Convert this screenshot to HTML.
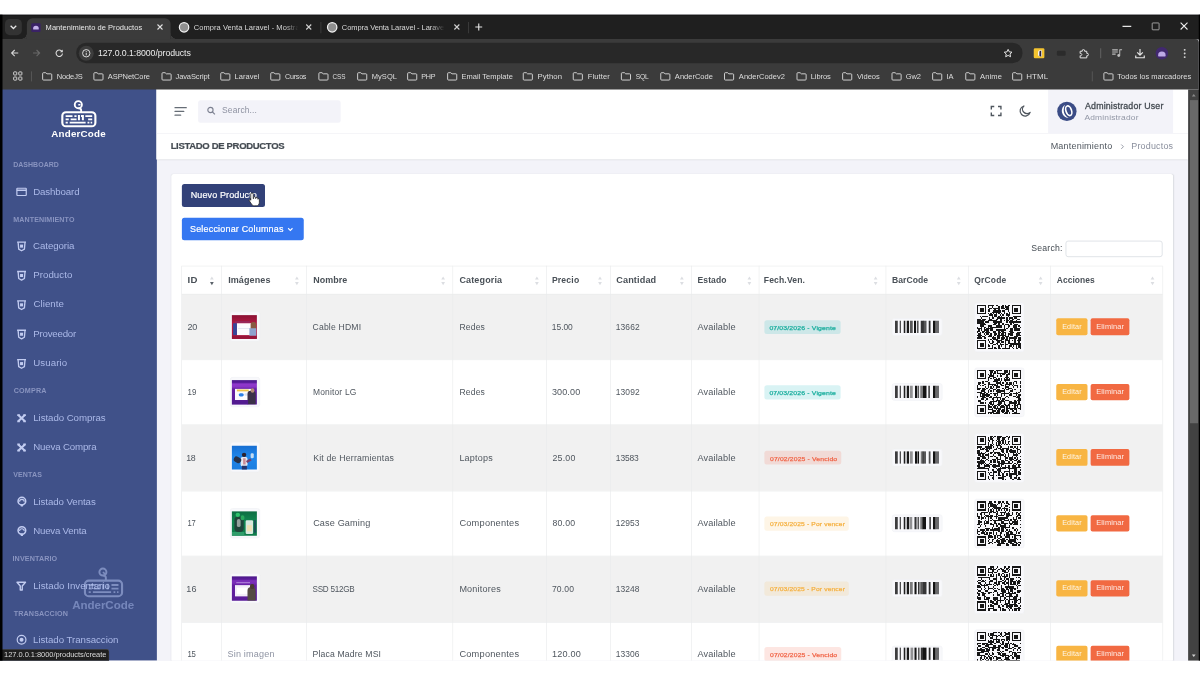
<!DOCTYPE html>
<html lang="es">
<head>
<meta charset="utf-8">
<title>Mantenimiento de Productos</title>
<style>
*{box-sizing:border-box;margin:0;padding:0}
html,body{width:1200px;height:675px;overflow:hidden;background:#fff}
body{font-family:"Liberation Sans",sans-serif;position:relative}
#stage{filter:blur(.75px);position:absolute;left:0;top:0;width:1920px;height:1034px;transform:translateY(14.5px) scale(.625);transform-origin:0 0;background:#f3f3f9;overflow:hidden}
#botmask{position:absolute;left:0;top:660.5px;width:1200px;height:15px;background:#fff;z-index:60}
.t{position:absolute;white-space:nowrap;line-height:1;display:block;transform-origin:0 50%}
.a{position:absolute;display:block}
svg{position:absolute;display:block;overflow:visible}
#tabstrip{position:absolute;left:0;top:0;width:1920px;height:40px;background:#1f1f1f;border-top:2px solid #171717}
#toolbar{position:absolute;left:0;top:38.5px;width:1918px;height:81.4px;background:#3b3b3b;border-top-right-radius:6px}
#page{position:absolute;left:0;top:0;width:1901px;height:1034px;background:#f3f3f9;overflow:hidden}
#vscroll{position:absolute;left:1901px;top:120px;width:19px;height:914px;background:#424242}
#thumb{position:absolute;left:2.5px;top:17px;width:13.5px;height:517px;background:#696969}
.arr{position:absolute;left:5.5px;width:0;height:0;border-left:3.5px solid transparent;border-right:3.5px solid transparent}
#sidebar{position:absolute;left:0;top:119px;width:250.500px;height:915px;background:#405189}
#topbar{position:absolute;left:250px;top:119px;width:1651px;height:71px;background:#fff}
#titlebar{position:absolute;left:250px;top:190px;width:1651px;height:42px;background:#fff;border-top:1px solid #f1f1f6;box-shadow:0 1px 2px rgba(56,65,74,.15)}
#card{position:absolute;left:274px;top:255px;width:1603px;height:900px;background:#fff;border-radius:4px 4px 0 0;box-shadow:0 1px 2px rgba(56,65,74,.15)}
.th{background:#f8f8fb;border:1px solid #f1f2f6;border-radius:4px}
.im{width:40px;height:38.500px;overflow:hidden}
.im i{position:absolute;display:block}

</style>
</head>
<body>
<div id="stage">
<div id="page">
<div id="sidebar"></div>
<svg style="left:98.08px;top:137.28px" width="56.32" height="43.52000000000001" viewBox="0 0 56.300 43.500">
<rect x="1.700" y="19.300" width="52.900" height="22.500" rx="5.800" fill="none" stroke="#fff" stroke-width="3.400"/>
<path d="M31.800 19.300v-3.300c0-2.400-1.500-3-4-3.100" fill="none" stroke="#fff" stroke-width="3"/>
<circle cx="27.300" cy="7.300" r="5.700" fill="none" stroke="#fff" stroke-width="3"/>
<path d="M27.300 7.300h3.400" stroke="#fff" stroke-width="2.600"/>
<g stroke="#fff" stroke-width="3" fill="none"><path d="M7 25.600h11M21 25.600h3.500M38.500 25.600h11M7 30.700h5M15 30.700h9.500M43 30.700h6.500M7 35.900h3.500M13.500 35.900h25.500M42 35.900h3M47 35.900h2.500"/><path d="M28.300 23.800v8.200M34.600 23.800v8.200M34.600 25.300h-3" stroke-width="3.200"/></g></svg>
<span class="t" style="left:82.48px;top:183.00px;font-size:15.5px;color:#fff;font-weight:700;letter-spacing:0.341px;transform:scaleX(1.008);">AnderCode</span>
<span class="t" style="left:21.27px;top:235.00px;font-size:11px;color:#8994c0;font-weight:700;letter-spacing:0.085px;transform:scaleX(1.015);">DASHBOARD</span>
<span class="t" style="left:21.42px;top:323.00px;font-size:11px;color:#8994c0;font-weight:700;letter-spacing:0.196px;transform:scaleX(1.033);">MANTENIMIENTO</span>
<span class="t" style="left:21.70px;top:597.00px;font-size:11px;color:#8994c0;font-weight:700;letter-spacing:0.242px;transform:scaleX(1.043);">COMPRA</span>
<span class="t" style="left:20.70px;top:731.00px;font-size:11px;color:#8994c0;font-weight:700;letter-spacing:0.242px;transform:scaleX(1.027);">VENTAS</span>
<span class="t" style="left:19.52px;top:865.00px;font-size:11px;color:#8994c0;font-weight:700;letter-spacing:0.165px;transform:scaleX(1.044);">INVENTARIO</span>
<span class="t" style="left:21.77px;top:953.00px;font-size:11px;color:#8994c0;font-weight:700;letter-spacing:0.171px;transform:scaleX(1.044);">TRANSACCION</span>
<svg style="left:25.6px;top:277.1px" width="17" height="13.600" viewBox="0 0 17 15" preserveAspectRatio="none"><rect x="1" y="1" width="15" height="13" rx="1" fill="none" stroke="#c2ccf1" stroke-width="1.900"/><path d="M1 4.600h15" stroke="#c2ccf1" stroke-width="2.600"/></svg>
<span class="t" style="left:53.14px;top:276.00px;font-size:15.5px;color:#abb9e8;letter-spacing:-0.199px;">Dashboard</span>
<svg style="left:25.92px;top:362.62px" width="17" height="16.500" viewBox="0 0 17 17"><path d="M1.200 1.300h14.600" stroke="#c2ccf1" stroke-width="2.300"/><path d="M2.800 1.500l1 11.300 4.700 2.600 4.700-2.600 1-11.300" fill="none" stroke="#c2ccf1" stroke-width="2.200" stroke-linejoin="round"/><rect x="6" y="5.300" width="5" height="5" fill="#c2ccf1"/></svg>
<span class="t" style="left:52.96px;top:362.00px;font-size:15.5px;color:#abb9e8;letter-spacing:-0.130px;">Categoria</span>
<svg style="left:25.92px;top:409.82px" width="17" height="16.500" viewBox="0 0 17 17"><path d="M1.200 1.300h14.600" stroke="#c2ccf1" stroke-width="2.300"/><path d="M2.800 1.500l1 11.300 4.700 2.600 4.700-2.600 1-11.300" fill="none" stroke="#c2ccf1" stroke-width="2.200" stroke-linejoin="round"/><rect x="6" y="5.300" width="5" height="5" fill="#c2ccf1"/></svg>
<span class="t" style="left:53.10px;top:409.00px;font-size:15.5px;color:#abb9e8;letter-spacing:0.076px;">Producto</span>
<svg style="left:25.92px;top:456.53999999999996px" width="17" height="16.500" viewBox="0 0 17 17"><path d="M1.200 1.300h14.600" stroke="#c2ccf1" stroke-width="2.300"/><path d="M2.800 1.500l1 11.300 4.700 2.600 4.700-2.600 1-11.300" fill="none" stroke="#c2ccf1" stroke-width="2.200" stroke-linejoin="round"/><rect x="6" y="5.300" width="5" height="5" fill="#c2ccf1"/></svg>
<span class="t" style="left:53.71px;top:455.00px;font-size:15.5px;color:#abb9e8;letter-spacing:0.044px;">Cliente</span>
<svg style="left:25.92px;top:503.74px" width="17" height="16.500" viewBox="0 0 17 17"><path d="M1.200 1.300h14.600" stroke="#c2ccf1" stroke-width="2.300"/><path d="M2.800 1.500l1 11.300 4.700 2.600 4.700-2.600 1-11.300" fill="none" stroke="#c2ccf1" stroke-width="2.200" stroke-linejoin="round"/><rect x="6" y="5.300" width="5" height="5" fill="#c2ccf1"/></svg>
<span class="t" style="left:53.13px;top:503.00px;font-size:15.5px;color:#abb9e8;letter-spacing:-0.330px;">Proveedor</span>
<svg style="left:25.92px;top:550.94px" width="17" height="16.500" viewBox="0 0 17 17"><path d="M1.200 1.300h14.600" stroke="#c2ccf1" stroke-width="2.300"/><path d="M2.800 1.500l1 11.300 4.700 2.600 4.700-2.600 1-11.300" fill="none" stroke="#c2ccf1" stroke-width="2.200" stroke-linejoin="round"/><rect x="6" y="5.300" width="5" height="5" fill="#c2ccf1"/></svg>
<span class="t" style="left:53.18px;top:549.00px;font-size:15.5px;color:#abb9e8;letter-spacing:0.158px;">Usuario</span>
<svg style="left:26.88px;top:638.96px" width="15" height="13.800" viewBox="0 0 16 15"><path d="M2.200 2l11.600 11M13.800 2L2.200 13" stroke="#c2ccf1" stroke-width="3.600"/><path d="M0.500 0.500h4.500v3h-4.500zM11 0.500h4.500v3H11zM0.500 11.500h4.500v3h-4.500zM11 11.500h4.500v3H11z" fill="#c2ccf1"/></svg>
<span class="t" style="left:53.13px;top:637.00px;font-size:15.5px;color:#abb9e8;letter-spacing:-0.092px;">Listado Compras</span>
<svg style="left:26.88px;top:685.84px" width="15" height="13.800" viewBox="0 0 16 15"><path d="M2.200 2l11.600 11M13.800 2L2.200 13" stroke="#c2ccf1" stroke-width="3.600"/><path d="M0.500 0.500h4.500v3h-4.500zM11 0.500h4.500v3H11zM0.500 11.500h4.500v3h-4.500zM11 11.500h4.500v3H11z" fill="#c2ccf1"/></svg>
<span class="t" style="left:53.14px;top:684.00px;font-size:15.5px;color:#abb9e8;letter-spacing:-0.261px;">Nueva Compra</span>
<svg style="left:26.72px;top:771.18px" width="16" height="17" viewBox="0 0 16 17"><circle cx="8" cy="7.600" r="6.100" fill="none" stroke="#c2ccf1" stroke-width="2.500"/><path d="M4.300 8.500a3.700 3.700 0 0 1 7.400 0" fill="none" stroke="#c2ccf1" stroke-width="1.700"/><path d="M5.600 12.500h4.800l-.8 3.700H6.400z" fill="#c2ccf1"/></svg>
<span class="t" style="left:53.10px;top:772.00px;font-size:15.5px;color:#abb9e8;letter-spacing:-0.124px;">Listado Ventas</span>
<svg style="left:26.72px;top:817.9px" width="16" height="17" viewBox="0 0 16 17"><circle cx="8" cy="7.600" r="6.100" fill="none" stroke="#c2ccf1" stroke-width="2.500"/><path d="M4.300 8.500a3.700 3.700 0 0 1 7.400 0" fill="none" stroke="#c2ccf1" stroke-width="1.700"/><path d="M5.600 12.500h4.800l-.8 3.700H6.400z" fill="#c2ccf1"/></svg>
<span class="t" style="left:53.14px;top:818.00px;font-size:15.5px;color:#abb9e8;letter-spacing:-0.340px;">Nueva Venta</span>
<svg style="left:26.4px;top:907.38px" width="16" height="15" viewBox="0 0 16 15"><path d="M1.200 1.300h13.600l-5.200 6.200v6.200h-3.200V7.500z" fill="none" stroke="#c2ccf1" stroke-width="2.200" stroke-linejoin="round"/></svg>
<span class="t" style="left:53.08px;top:906.00px;font-size:15.5px;color:#abb9e8;letter-spacing:0.024px;">Listado Inventario</span>
<svg style="left:26.08px;top:992.3px" width="17" height="17" viewBox="0 0 17 17"><circle cx="8.500" cy="8.500" r="7" fill="none" stroke="#c2ccf1" stroke-width="1.900"/><circle cx="8.500" cy="8.500" r="3.200" fill="#c2ccf1"/></svg>
<span class="t" style="left:52.94px;top:993.00px;font-size:15.5px;color:#abb9e8;letter-spacing:-0.067px;">Listado Transaccion</span>
<svg style="left:133.6px;top:885.28px;opacity:.46" width="63.2" height="47.51999999999998" viewBox="0 0 56.300 42.300">
<rect x="1.700" y="18.500" width="52.900" height="22.300" rx="5.500" fill="none" stroke="#c6d5ff" stroke-width="3"/>
<path d="M31.500 18.500v-4c0-2.400-1.500-3-3.800-3.100" fill="none" stroke="#c6d5ff" stroke-width="2.800"/>
<circle cx="27.300" cy="6.300" r="5" fill="none" stroke="#c6d5ff" stroke-width="2.800"/>
<path d="M27.300 6.300l3 2.500" stroke="#c6d5ff" stroke-width="2.200"/>
<g stroke="#c6d5ff" stroke-width="2.600" fill="none"><path d="M7 24.800h10M20.500 24.800h3M39.500 24.800h10M7 29.800h4.500M14.500 29.800h9M39.500 29.800h10M7 34.900h3M13 34.900h26M42.500 34.900h2.500M47.500 34.900h2"/><path d="M27.800 23v8M34 23v8" stroke-width="3"/></g></svg>
<span class="t" style="left:115.41px;top:936.00px;font-size:18.5px;color:rgba(190,208,255,.42);font-weight:700;letter-spacing:-0.063px;">AnderCode</span>
<div id="topbar"></div><div id="titlebar"></div>
<div class="a" style="left:278.72px;top:147.8px;width:20.47999999999996px;height:1.900px;border-radius:1px;background:#666d76"></div>
<div class="a" style="left:278.72px;top:153.88px;width:16.159999999999968px;height:1.900px;border-radius:1px;background:#666d76"></div>
<div class="a" style="left:278.72px;top:160.12px;width:11.199999999999989px;height:1.900px;border-radius:1px;background:#666d76"></div>
<div class="a" style="left:316.8px;top:137.12px;width:228.16000000000003px;height:35.84px;border-radius:4px;background:#f3f3f9"></div>
<svg style="left:330.92px;top:147.08px" width="14" height="14" viewBox="0 0 14 14"><circle cx="5.700" cy="5.700" r="4.200" fill="none" stroke="#7c8090" stroke-width="1.800"/><path d="M8.800 8.800l4 4" stroke="#7c8090" stroke-width="2"/></svg>
<span class="t" style="left:355.29px;top:147.00px;font-size:13.5px;color:#8e92a1;letter-spacing:0.205px;">Search...</span>
<svg style="left:1584.8px;top:146.08px" width="17.6" height="16.64" viewBox="0 0 17.600 16.600"><g fill="none" stroke="#4f565e" stroke-width="2.200"><path d="M1.100 5.800V1.100h4.700M11.800 1.100h4.700v4.700M16.500 10.800v4.700h-4.700M5.800 15.500H1.100v-4.700"/></g></svg>
<svg style="left:1629.92px;top:145.28px" width="19.52" height="18.88" viewBox="0 0 19.500 18.900"><path d="M8.200 1.400a8.200 8.200 0 1 0 10 10.200a6.300 6.300 0 0 1-10-10.200z" fill="none" stroke="#4f565e" stroke-width="2" stroke-linejoin="round"/></svg>
<div class="a" style="left:1676.64px;top:120px;width:200.63999999999987px;height:70px;background:#f3f3f9"></div>
<svg style="left:1691.04px;top:139.2px" width="32" height="32" viewBox="0 0 32 32"><circle cx="16" cy="16" r="15.500" fill="#3b4c86"/><path d="M13 5.500c-5 3.500-6.500 10-3.500 15.500c2 3.500 5.500 5.500 9.500 5.500c-6-3-8.500-8.500-8-13.500c.3-3 1-5.500 2-7.500z" fill="#fff"/><ellipse cx="19" cy="15" rx="4.500" ry="8" transform="rotate(-18 19 15)" fill="none" stroke="#fff" stroke-width="2.600"/></svg>
<span class="t" style="left:1735.88px;top:140.00px;font-size:13.5px;color:#434a51;letter-spacing:0.261px;transform:scaleX(1.045);-webkit-text-stroke:.45px #434a51;">Administrador User</span>
<span class="t" style="left:1734.68px;top:159.00px;font-size:12.5px;color:#9297a6;letter-spacing:0.275px;transform:scaleX(1.077);">Administrador</span>
<span class="t" style="left:273.30px;top:202.00px;font-size:15.5px;color:#454c53;font-weight:700;letter-spacing:-0.530px;transform:scaleX(0.982);-webkit-text-stroke:.35px #454c53;">LISTADO DE PRODUCTOS</span>
<span class="t" style="left:1681.25px;top:204.00px;font-size:13.5px;color:#4f565e;letter-spacing:0.297px;transform:scaleX(1.069);">Mantenimiento</span>
<svg style="left:1793.48px;top:206.86px" width="6" height="9" viewBox="0 0 6 9"><path d="M1 1l3.500 3.500L1 8" fill="none" stroke="#8a8f9d" stroke-width="1.400"/></svg>
<span class="t" style="left:1810.07px;top:204.00px;font-size:13.5px;color:#8a8f9d;letter-spacing:0.297px;transform:scaleX(1.060);">Productos</span>
<div id="card"></div>
<div class="a" style="left:290.72px;top:271.2px;width:133.59999999999997px;height:37.28000000000003px;border-radius:4px;background:#324178"></div>
<span class="t" style="left:304.64px;top:283.00px;font-size:13.5px;color:#fff;letter-spacing:0.191px;transform:scaleX(1.067);-webkit-text-stroke:.3px #fff;">Nuevo Producto</span>
<div class="a" style="left:290.72px;top:325.12px;width:195.2px;height:36.31999999999999px;border-radius:4px;background:#3577f1"></div>
<span class="t" style="left:304.39px;top:337.00px;font-size:13.5px;color:#fff;letter-spacing:0.297px;transform:scaleX(1.062);-webkit-text-stroke:.3px #fff;">Seleccionar Columnas</span>
<svg style="left:459.5px;top:340.68px" width="9" height="6" viewBox="0 0 9 6"><path d="M1 1l3.500 3.500L8 1" fill="none" stroke="#fff" stroke-width="1.700"/></svg>
<svg style="left:397.6px;top:284.32px" width="16.96" height="23.68" viewBox="0 0 17 24"><path d="M5.200 1.500c1.200 0 2 .8 2 2v7.300l.6-.1v-1.500c0-1 .7-1.600 1.600-1.600s1.600.7 1.600 1.600v1.200l.6-.1c0-.9.700-1.500 1.500-1.500s1.500.7 1.500 1.600v1.300c.3-.5.800-.8 1.300-.7.800.1 1.200.8 1.200 1.600v4.400c0 3.500-2 5.500-5.200 5.500H9.200c-2.200 0-3.600-.9-4.700-2.700L1 14.500c-.5-.9-.3-1.800.4-2.200.8-.5 1.700-.1 2.200.6l-.4.500V3.500c0-1.200.8-2 2-2z" fill="#fff" stroke="#222" stroke-width="1.300" stroke-linejoin="round"/></svg>
<span class="t" style="left:1649.81px;top:367.00px;font-size:13.5px;color:#434a51;letter-spacing:0.297px;transform:scaleX(1.033);">Search:</span>
<div class="a" style="left:1704.64px;top:361.6px;width:155.67999999999984px;height:26.71999999999997px;border-radius:4px;border:1.500px solid #ced4da;background:#fff"></div>
<div class="a" style="left:290.72px;top:447.2px;width:1569.6px;height:104.95999999999998px;background:#f1f1f1"></div>
<div class="a" style="left:290.72px;top:656.96px;width:1569.6px;height:105.12px;background:#f1f1f1"></div>
<div class="a" style="left:290.72px;top:866.72px;width:1569.6px;height:105.27999999999997px;background:#f1f1f1"></div>
<div class="a" style="left:290.72px;top:401.9px;width:1569.6px;height:1px;background:#e9ebec"></div>
<div class="a" style="left:290.72px;top:446.7px;width:1569.6px;height:1px;background:#e9ebec"></div>
<div class="a" style="left:290.72px;top:551.66px;width:1569.6px;height:1px;background:#e9ebec"></div>
<div class="a" style="left:290.72px;top:656.46px;width:1569.6px;height:1px;background:#e9ebec"></div>
<div class="a" style="left:290.72px;top:761.58px;width:1569.6px;height:1px;background:#e9ebec"></div>
<div class="a" style="left:290.72px;top:866.22px;width:1569.6px;height:1px;background:#e9ebec"></div>
<div class="a" style="left:290.72px;top:971.5px;width:1569.6px;height:1px;background:#e9ebec"></div>
<div class="a" style="left:290.22px;top:402.4px;width:1px;height:700px;background:#e9ebec"></div>
<div class="a" style="left:354.38px;top:402.4px;width:1px;height:700px;background:#e9ebec"></div>
<div class="a" style="left:490.38px;top:402.4px;width:1px;height:700px;background:#e9ebec"></div>
<div class="a" style="left:724.46px;top:402.4px;width:1px;height:700px;background:#e9ebec"></div>
<div class="a" style="left:874.38px;top:402.4px;width:1px;height:700px;background:#e9ebec"></div>
<div class="a" style="left:975.5px;top:402.4px;width:1px;height:700px;background:#e9ebec"></div>
<div class="a" style="left:1106.38px;top:402.4px;width:1px;height:700px;background:#e9ebec"></div>
<div class="a" style="left:1214.06px;top:402.4px;width:1px;height:700px;background:#e9ebec"></div>
<div class="a" style="left:1416.94px;top:402.4px;width:1px;height:700px;background:#e9ebec"></div>
<div class="a" style="left:1549.1px;top:402.4px;width:1px;height:700px;background:#e9ebec"></div>
<div class="a" style="left:1680.3px;top:402.4px;width:1px;height:700px;background:#e9ebec"></div>
<div class="a" style="left:1859.82px;top:402.4px;width:1px;height:700px;background:#e9ebec"></div>
<span class="t" style="left:299.82px;top:419.00px;font-size:13.5px;color:#495057;font-weight:700;letter-spacing:0.297px;transform:scaleX(1.140);">ID</span>
<span class="t" style="left:364.53px;top:419.00px;font-size:13.5px;color:#495057;font-weight:700;letter-spacing:0.172px;transform:scaleX(1.067);">Imágenes</span>
<span class="t" style="left:500.56px;top:419.00px;font-size:13.5px;color:#495057;font-weight:700;letter-spacing:0.160px;transform:scaleX(1.056);">Nombre</span>
<span class="t" style="left:735.30px;top:419.00px;font-size:13.5px;color:#495057;font-weight:700;letter-spacing:0.240px;transform:scaleX(1.065);">Categoria</span>
<span class="t" style="left:883.14px;top:419.00px;font-size:13.5px;color:#495057;font-weight:700;letter-spacing:0.296px;transform:scaleX(1.021);">Precio</span>
<span class="t" style="left:986.05px;top:419.00px;font-size:13.5px;color:#495057;font-weight:700;letter-spacing:0.190px;transform:scaleX(1.081);">Cantidad</span>
<span class="t" style="left:1116.02px;top:419.00px;font-size:13.5px;color:#495057;font-weight:700;letter-spacing:0.163px;transform:scaleX(1.012);">Estado</span>
<span class="t" style="left:1221.73px;top:419.00px;font-size:13.5px;color:#495057;font-weight:700;letter-spacing:0.244px;transform:scaleX(1.015);">Fech.Ven.</span>
<span class="t" style="left:1427.02px;top:419.00px;font-size:13.5px;color:#495057;font-weight:700;letter-spacing:0.109px;transform:scaleX(1.019);">BarCode</span>
<span class="t" style="left:1558.88px;top:419.00px;font-size:13.5px;color:#495057;font-weight:700;letter-spacing:0.297px;">QrCode</span>
<span class="t" style="left:1690.88px;top:419.00px;font-size:13.5px;color:#495057;font-weight:700;letter-spacing:0.095px;">Acciones</span>
<div class="a" style="left:335.88px;top:418.76px;width:0;height:0;border-left:3px solid transparent;border-right:3px solid transparent;border-bottom:5px solid #dcdee2"></div>
<div class="a" style="left:335.88px;top:427.76px;width:0;height:0;border-left:3px solid transparent;border-right:3px solid transparent;border-top:5px solid #5b626a"></div>
<div class="a" style="left:471.88px;top:418.76px;width:0;height:0;border-left:3px solid transparent;border-right:3px solid transparent;border-bottom:5px solid #dcdee2"></div>
<div class="a" style="left:471.88px;top:427.76px;width:0;height:0;border-left:3px solid transparent;border-right:3px solid transparent;border-top:5px solid #dcdee2"></div>
<div class="a" style="left:705.96px;top:418.76px;width:0;height:0;border-left:3px solid transparent;border-right:3px solid transparent;border-bottom:5px solid #dcdee2"></div>
<div class="a" style="left:705.96px;top:427.76px;width:0;height:0;border-left:3px solid transparent;border-right:3px solid transparent;border-top:5px solid #dcdee2"></div>
<div class="a" style="left:855.88px;top:418.76px;width:0;height:0;border-left:3px solid transparent;border-right:3px solid transparent;border-bottom:5px solid #dcdee2"></div>
<div class="a" style="left:855.88px;top:427.76px;width:0;height:0;border-left:3px solid transparent;border-right:3px solid transparent;border-top:5px solid #dcdee2"></div>
<div class="a" style="left:957.0px;top:418.76px;width:0;height:0;border-left:3px solid transparent;border-right:3px solid transparent;border-bottom:5px solid #dcdee2"></div>
<div class="a" style="left:957.0px;top:427.76px;width:0;height:0;border-left:3px solid transparent;border-right:3px solid transparent;border-top:5px solid #dcdee2"></div>
<div class="a" style="left:1087.88px;top:418.76px;width:0;height:0;border-left:3px solid transparent;border-right:3px solid transparent;border-bottom:5px solid #dcdee2"></div>
<div class="a" style="left:1087.88px;top:427.76px;width:0;height:0;border-left:3px solid transparent;border-right:3px solid transparent;border-top:5px solid #dcdee2"></div>
<div class="a" style="left:1195.56px;top:418.76px;width:0;height:0;border-left:3px solid transparent;border-right:3px solid transparent;border-bottom:5px solid #dcdee2"></div>
<div class="a" style="left:1195.56px;top:427.76px;width:0;height:0;border-left:3px solid transparent;border-right:3px solid transparent;border-top:5px solid #dcdee2"></div>
<div class="a" style="left:1398.44px;top:418.76px;width:0;height:0;border-left:3px solid transparent;border-right:3px solid transparent;border-bottom:5px solid #dcdee2"></div>
<div class="a" style="left:1398.44px;top:427.76px;width:0;height:0;border-left:3px solid transparent;border-right:3px solid transparent;border-top:5px solid #dcdee2"></div>
<div class="a" style="left:1530.6px;top:418.76px;width:0;height:0;border-left:3px solid transparent;border-right:3px solid transparent;border-bottom:5px solid #dcdee2"></div>
<div class="a" style="left:1530.6px;top:427.76px;width:0;height:0;border-left:3px solid transparent;border-right:3px solid transparent;border-top:5px solid #dcdee2"></div>
<div class="a" style="left:1661.8px;top:418.76px;width:0;height:0;border-left:3px solid transparent;border-right:3px solid transparent;border-bottom:5px solid #dcdee2"></div>
<div class="a" style="left:1661.8px;top:427.76px;width:0;height:0;border-left:3px solid transparent;border-right:3px solid transparent;border-top:5px solid #dcdee2"></div>
<div class="a" style="left:1841.32px;top:418.76px;width:0;height:0;border-left:3px solid transparent;border-right:3px solid transparent;border-bottom:5px solid #dcdee2"></div>
<div class="a" style="left:1841.32px;top:427.76px;width:0;height:0;border-left:3px solid transparent;border-right:3px solid transparent;border-top:5px solid #dcdee2"></div>
<span class="t" style="left:300.42px;top:494.00px;font-size:13.5px;color:#50575f;letter-spacing:-0.384px;transform:scaleX(1.076);">20</span>
<div class="a th" style="left:367.52px;top:475.36px;width:48px;height:48px"></div>
<div class="a im" style="left:371.36px;top:480.66px;background:linear-gradient(180deg,#8c1235 0,#a5183f 25%,#b51b45 34%,#ad1941 100%)"><i style="left:5px;top:10px;width:24px;height:2px;background:#7d3a78;opacity:.7"></i><i style="left:8px;top:13px;width:23px;height:19.500px;background:#fcfcfe"></i><i style="left:2px;top:13.500px;width:6px;height:19px;background:#34489c"></i><i style="left:10px;top:21px;width:19px;height:1.500px;background:#d9dcea"></i><i style="left:30px;top:11px;width:9px;height:12px;border-radius:4px 4px 0 0;background:#8a5a42"></i><i style="left:28px;top:21px;width:11px;height:14px;background:#8fa3cf"></i><i style="left:0;top:33px;width:40px;height:5px;background:#98153a"></i></div>
<span class="t" style="left:500.33px;top:494.00px;font-size:13.5px;color:#50575f;letter-spacing:0.297px;transform:scaleX(1.020);">Cable HDMI</span>
<span class="t" style="left:735.49px;top:494.00px;font-size:13.5px;color:#50575f;letter-spacing:0.297px;transform:scaleX(1.015);">Redes</span>
<span class="t" style="left:882.93px;top:494.00px;font-size:13.5px;color:#50575f;letter-spacing:-0.062px;">15.00</span>
<span class="t" style="left:985.32px;top:494.00px;font-size:13.5px;color:#50575f;letter-spacing:0.124px;">13662</span>
<span class="t" style="left:1116.24px;top:494.00px;font-size:13.5px;color:#50575f;letter-spacing:0.171px;transform:scaleX(1.088);">Available</span>
<div class="a" style="left:1223.36px;top:488.7px;width:121.44000000000005px;height:22.600px;border-radius:4px;background:rgba(30,185,190,.17)"></div>
<span class="t" style="left:1231.15px;top:497.00px;font-size:10px;color:#19ad9d;letter-spacing:0.220px;transform:scaleX(1.098);-webkit-text-stroke:.4px #19ad9d;">07/03/2026 - Vigente</span>
<div class="a th" style="left:1427.2px;top:485.84px;width:80.63999999999987px;height:28px"></div>
<svg style="left:1432.0px;top:489.56px" width="70.7" height="19.6" viewBox="0 0 70.7 19.6" fill="#141414"><rect x="0.0" width="4.4" height="19.6" fill-opacity="0.82"/><rect x="7.6" width="1.7" height="19.6" fill-opacity="0.90"/><rect x="14.0" width="2.5" height="19.6" fill-opacity="0.95"/><rect x="18.8" width="3.7" height="19.6" fill-opacity="0.97"/><rect x="24.0" width="4.4" height="19.6" fill-opacity="0.70"/><rect x="30.4" width="3.3" height="19.6" fill-opacity="1.00"/><rect x="35.2" width="2.5" height="19.6" fill-opacity="0.70"/><rect x="41.2" width="4.4" height="19.6" fill-opacity="0.85"/><rect x="44.8" width="5.6" height="19.6" fill-opacity="0.70"/><rect x="54.0" width="2.8" height="19.6" fill-opacity="0.90"/><rect x="60.8" width="4.0" height="19.6" fill-opacity="1.00"/><rect x="64.8" width="5.6" height="19.6" fill-opacity="0.62"/></svg>
<div class="a th" style="left:1559.36px;top:460.64px;width:79.36000000000013px;height:79.36px"></div>
<svg style="left:1562.88px;top:464.8px" width="70.7" height="70.7" viewBox="0 0 33 33" shape-rendering="crispEdges"><path d="M0 0h7v1h-7zM8 0h5v1h-5zM14 0h2v1h-2zM19 0h1v1h-1zM21 0h1v1h-1zM23 0h2v1h-2zM26 0h7v1h-7zM0 1h1v1h-1zM6 1h1v1h-1zM8 1h1v1h-1zM11 1h1v1h-1zM16 1h1v1h-1zM18 1h2v1h-2zM21 1h3v1h-3zM26 1h1v1h-1zM32 1h1v1h-1zM0 2h1v1h-1zM2 2h3v1h-3zM6 2h1v1h-1zM9 2h2v1h-2zM12 2h5v1h-5zM18 2h3v1h-3zM22 2h2v1h-2zM26 2h1v1h-1zM28 2h3v1h-3zM32 2h1v1h-1zM0 3h1v1h-1zM2 3h3v1h-3zM6 3h1v1h-1zM8 3h2v1h-2zM13 3h1v1h-1zM16 3h1v1h-1zM21 3h3v1h-3zM26 3h1v1h-1zM28 3h3v1h-3zM32 3h1v1h-1zM0 4h1v1h-1zM2 4h3v1h-3zM6 4h1v1h-1zM8 4h2v1h-2zM12 4h6v1h-6zM19 4h2v1h-2zM23 4h1v1h-1zM26 4h1v1h-1zM28 4h3v1h-3zM32 4h1v1h-1zM0 5h1v1h-1zM6 5h1v1h-1zM11 5h7v1h-7zM20 5h1v1h-1zM24 5h1v1h-1zM26 5h1v1h-1zM32 5h1v1h-1zM0 6h7v1h-7zM8 6h1v1h-1zM10 6h1v1h-1zM12 6h1v1h-1zM14 6h1v1h-1zM16 6h1v1h-1zM18 6h1v1h-1zM20 6h1v1h-1zM22 6h1v1h-1zM24 6h1v1h-1zM26 6h7v1h-7zM9 7h3v1h-3zM13 7h2v1h-2zM17 7h1v1h-1zM19 7h1v1h-1zM22 7h3v1h-3zM2 8h1v1h-1zM4 8h4v1h-4zM11 8h1v1h-1zM13 8h2v1h-2zM16 8h1v1h-1zM18 8h1v1h-1zM23 8h1v1h-1zM27 8h6v1h-6zM3 9h1v1h-1zM9 9h1v1h-1zM11 9h2v1h-2zM15 9h6v1h-6zM22 9h1v1h-1zM24 9h3v1h-3zM28 9h2v1h-2zM0 10h3v1h-3zM4 10h3v1h-3zM9 10h2v1h-2zM14 10h2v1h-2zM17 10h2v1h-2zM22 10h1v1h-1zM24 10h1v1h-1zM26 10h2v1h-2zM30 10h2v1h-2zM0 11h6v1h-6zM8 11h7v1h-7zM17 11h2v1h-2zM20 11h1v1h-1zM22 11h2v1h-2zM25 11h2v1h-2zM29 11h1v1h-1zM0 12h5v1h-5zM6 12h3v1h-3zM12 12h7v1h-7zM22 12h1v1h-1zM24 12h9v1h-9zM0 13h6v1h-6zM13 13h2v1h-2zM16 13h1v1h-1zM19 13h1v1h-1zM25 13h1v1h-1zM27 13h1v1h-1zM2 14h5v1h-5zM12 14h2v1h-2zM16 14h1v1h-1zM19 14h1v1h-1zM21 14h3v1h-3zM25 14h1v1h-1zM28 14h3v1h-3zM2 15h3v1h-3zM8 15h3v1h-3zM14 15h5v1h-5zM20 15h1v1h-1zM23 15h2v1h-2zM27 15h3v1h-3zM31 15h1v1h-1zM0 16h1v1h-1zM3 16h1v1h-1zM5 16h2v1h-2zM8 16h1v1h-1zM10 16h9v1h-9zM20 16h1v1h-1zM23 16h1v1h-1zM27 16h3v1h-3zM32 16h1v1h-1zM0 17h4v1h-4zM5 17h1v1h-1zM7 17h5v1h-5zM20 17h1v1h-1zM22 17h1v1h-1zM25 17h2v1h-2zM28 17h4v1h-4zM1 18h1v1h-1zM3 18h1v1h-1zM5 18h4v1h-4zM10 18h2v1h-2zM14 18h8v1h-8zM25 18h2v1h-2zM28 18h4v1h-4zM0 19h2v1h-2zM4 19h2v1h-2zM7 19h2v1h-2zM12 19h2v1h-2zM16 19h1v1h-1zM18 19h2v1h-2zM24 19h3v1h-3zM0 20h1v1h-1zM2 20h1v1h-1zM4 20h1v1h-1zM6 20h4v1h-4zM12 20h2v1h-2zM16 20h2v1h-2zM19 20h3v1h-3zM25 20h3v1h-3zM30 20h3v1h-3zM1 21h2v1h-2zM5 21h1v1h-1zM7 21h2v1h-2zM10 21h1v1h-1zM13 21h2v1h-2zM16 21h1v1h-1zM18 21h2v1h-2zM21 21h1v1h-1zM23 21h4v1h-4zM29 21h3v1h-3zM0 22h4v1h-4zM6 22h1v1h-1zM9 22h2v1h-2zM13 22h1v1h-1zM15 22h7v1h-7zM23 22h1v1h-1zM25 22h2v1h-2zM29 22h4v1h-4zM1 23h2v1h-2zM4 23h2v1h-2zM8 23h3v1h-3zM12 23h1v1h-1zM15 23h2v1h-2zM19 23h1v1h-1zM21 23h3v1h-3zM28 23h3v1h-3zM0 24h4v1h-4zM5 24h2v1h-2zM11 24h3v1h-3zM15 24h2v1h-2zM18 24h3v1h-3zM22 24h1v1h-1zM24 24h6v1h-6zM31 24h2v1h-2zM8 25h1v1h-1zM10 25h1v1h-1zM12 25h4v1h-4zM18 25h2v1h-2zM21 25h2v1h-2zM24 25h1v1h-1zM28 25h1v1h-1zM31 25h2v1h-2zM0 26h7v1h-7zM8 26h1v1h-1zM11 26h1v1h-1zM14 26h5v1h-5zM21 26h4v1h-4zM26 26h1v1h-1zM28 26h1v1h-1zM30 26h3v1h-3zM0 27h1v1h-1zM6 27h1v1h-1zM9 27h1v1h-1zM11 27h2v1h-2zM15 27h2v1h-2zM18 27h2v1h-2zM21 27h1v1h-1zM23 27h2v1h-2zM28 27h1v1h-1zM31 27h1v1h-1zM0 28h1v1h-1zM2 28h3v1h-3zM6 28h1v1h-1zM10 28h2v1h-2zM14 28h2v1h-2zM17 28h1v1h-1zM21 28h1v1h-1zM23 28h10v1h-10zM0 29h1v1h-1zM2 29h3v1h-3zM6 29h1v1h-1zM8 29h1v1h-1zM12 29h2v1h-2zM15 29h1v1h-1zM17 29h3v1h-3zM21 29h2v1h-2zM25 29h8v1h-8zM0 30h1v1h-1zM2 30h3v1h-3zM6 30h1v1h-1zM8 30h2v1h-2zM11 30h1v1h-1zM16 30h1v1h-1zM18 30h1v1h-1zM21 30h1v1h-1zM24 30h2v1h-2zM27 30h1v1h-1zM29 30h1v1h-1zM31 30h2v1h-2zM0 31h1v1h-1zM6 31h1v1h-1zM11 31h1v1h-1zM13 31h1v1h-1zM16 31h1v1h-1zM21 31h1v1h-1zM24 31h1v1h-1zM26 31h1v1h-1zM29 31h1v1h-1zM31 31h2v1h-2zM0 32h7v1h-7zM8 32h4v1h-4zM13 32h2v1h-2zM16 32h2v1h-2zM19 32h6v1h-6zM27 32h1v1h-1zM29 32h2v1h-2zM32 32h1v1h-1z" fill="#161616"/></svg>
<div class="a" style="left:1690.24px;top:486.16px;width:49.92000000000007px;height:26.400px;border-radius:3px;background:#f8b543"></div>
<span class="t" style="left:1699.43px;top:494.00px;font-size:11.5px;color:rgba(255,255,255,.88);letter-spacing:0.240px;">Editar</span>
<div class="a" style="left:1744.64px;top:486.16px;width:62.24000000000001px;height:26.400px;border-radius:3px;background:#f16942"></div>
<span class="t" style="left:1754.06px;top:494.00px;font-size:11.5px;color:rgba(255,255,255,.88);letter-spacing:0.219px;transform:scaleX(1.029);">Eliminar</span>
<span class="t" style="left:299.51px;top:598.00px;font-size:13.5px;color:#50575f;letter-spacing:0.250px;transform:scaleX(0.933);">19</span>
<div class="a th" style="left:367.52px;top:579.84px;width:48px;height:48px"></div>
<div class="a im" style="left:371.36px;top:585.14px;background:linear-gradient(180deg,#48178a 0,#5b1d9c 10%,#9038cc 16%,#8a34c6 28%,#6420a2 36%,#5a1c98 100%)"><i style="left:4.500px;top:13.500px;width:26px;height:18px;background:#fbfbfe"></i><i style="left:11px;top:20.500px;width:8px;height:5px;border-radius:3px;background:#2b7fe6"></i><i style="left:20px;top:21px;width:6px;height:4px;border-radius:2px;background:#d8e2f3"></i><i style="left:8px;top:15px;width:19px;height:2.500px;background:#f0c44a"></i><i style="left:25px;top:17px;width:13px;height:22px;border-radius:5px 5px 0 0;background:#3a3048"></i><i style="left:30px;top:13px;width:6px;height:7px;border-radius:3px;background:#b58a76"></i><i style="left:0;top:32px;width:26px;height:7px;background:#521a90"></i></div>
<span class="t" style="left:500.70px;top:598.00px;font-size:13.5px;color:#50575f;letter-spacing:0.297px;">Monitor LG</span>
<span class="t" style="left:735.49px;top:598.00px;font-size:13.5px;color:#50575f;letter-spacing:0.297px;transform:scaleX(1.015);">Redes</span>
<span class="t" style="left:882.96px;top:598.00px;font-size:13.5px;color:#50575f;letter-spacing:0.188px;transform:scaleX(1.072);">300.00</span>
<span class="t" style="left:985.32px;top:598.00px;font-size:13.5px;color:#50575f;letter-spacing:0.124px;">13092</span>
<span class="t" style="left:1116.24px;top:598.00px;font-size:13.5px;color:#50575f;letter-spacing:0.171px;transform:scaleX(1.088);">Available</span>
<div class="a" style="left:1223.36px;top:593.1800000000001px;width:121.44000000000005px;height:22.600px;border-radius:4px;background:rgba(30,185,190,.17)"></div>
<span class="t" style="left:1231.15px;top:601.00px;font-size:10px;color:#19ad9d;letter-spacing:0.220px;transform:scaleX(1.098);-webkit-text-stroke:.4px #19ad9d;">07/03/2026 - Vigente</span>
<div class="a th" style="left:1427.2px;top:590.32px;width:80.63999999999987px;height:28px"></div>
<svg style="left:1432.0px;top:594.0400000000001px" width="70.7" height="19.6" viewBox="0 0 70.7 19.6" fill="#141414"><rect x="0.0" width="4.4" height="19.6" fill-opacity="0.82"/><rect x="7.6" width="1.7" height="19.6" fill-opacity="0.90"/><rect x="14.0" width="2.5" height="19.6" fill-opacity="0.95"/><rect x="18.8" width="3.7" height="19.6" fill-opacity="0.97"/><rect x="24.0" width="4.4" height="19.6" fill-opacity="0.45"/><rect x="32.0" width="3.3" height="19.6" fill-opacity="1.00"/><rect x="36.0" width="2.5" height="19.6" fill-opacity="0.70"/><rect x="40.4" width="4.4" height="19.6" fill-opacity="0.55"/><rect x="44.8" width="5.6" height="19.6" fill-opacity="1.00"/><rect x="53.2" width="2.8" height="19.6" fill-opacity="0.75"/><rect x="60.8" width="4.0" height="19.6" fill-opacity="1.00"/><rect x="64.8" width="5.6" height="19.6" fill-opacity="0.62"/></svg>
<div class="a th" style="left:1559.36px;top:565.12px;width:79.36000000000013px;height:79.36px"></div>
<svg style="left:1562.88px;top:569.28px" width="70.7" height="70.7" viewBox="0 0 33 33" shape-rendering="crispEdges"><path d="M0 0h7v1h-7zM9 0h4v1h-4zM14 0h5v1h-5zM20 0h3v1h-3zM24 0h1v1h-1zM26 0h7v1h-7zM0 1h1v1h-1zM6 1h1v1h-1zM10 1h2v1h-2zM13 1h1v1h-1zM15 1h1v1h-1zM20 1h3v1h-3zM24 1h1v1h-1zM26 1h1v1h-1zM32 1h1v1h-1zM0 2h1v1h-1zM2 2h3v1h-3zM6 2h1v1h-1zM10 2h1v1h-1zM12 2h2v1h-2zM15 2h7v1h-7zM23 2h2v1h-2zM26 2h1v1h-1zM28 2h3v1h-3zM32 2h1v1h-1zM0 3h1v1h-1zM2 3h3v1h-3zM6 3h1v1h-1zM8 3h1v1h-1zM10 3h1v1h-1zM12 3h1v1h-1zM17 3h1v1h-1zM19 3h2v1h-2zM22 3h3v1h-3zM26 3h1v1h-1zM28 3h3v1h-3zM32 3h1v1h-1zM0 4h1v1h-1zM2 4h3v1h-3zM6 4h1v1h-1zM9 4h4v1h-4zM15 4h1v1h-1zM17 4h2v1h-2zM22 4h1v1h-1zM26 4h1v1h-1zM28 4h3v1h-3zM32 4h1v1h-1zM0 5h1v1h-1zM6 5h1v1h-1zM8 5h2v1h-2zM12 5h2v1h-2zM21 5h3v1h-3zM26 5h1v1h-1zM32 5h1v1h-1zM0 6h7v1h-7zM8 6h1v1h-1zM10 6h1v1h-1zM12 6h1v1h-1zM14 6h1v1h-1zM16 6h1v1h-1zM18 6h1v1h-1zM20 6h1v1h-1zM22 6h1v1h-1zM24 6h1v1h-1zM26 6h7v1h-7zM8 7h1v1h-1zM13 7h4v1h-4zM18 7h1v1h-1zM20 7h5v1h-5zM4 8h1v1h-1zM6 8h2v1h-2zM12 8h4v1h-4zM17 8h1v1h-1zM21 8h1v1h-1zM28 8h2v1h-2zM32 8h1v1h-1zM1 9h2v1h-2zM4 9h1v1h-1zM8 9h2v1h-2zM14 9h4v1h-4zM19 9h1v1h-1zM22 9h1v1h-1zM24 9h2v1h-2zM27 9h1v1h-1zM29 9h1v1h-1zM32 9h1v1h-1zM1 10h1v1h-1zM5 10h2v1h-2zM8 10h6v1h-6zM15 10h1v1h-1zM17 10h2v1h-2zM21 10h5v1h-5zM27 10h1v1h-1zM0 11h1v1h-1zM2 11h1v1h-1zM4 11h1v1h-1zM8 11h1v1h-1zM11 11h1v1h-1zM13 11h3v1h-3zM18 11h2v1h-2zM21 11h1v1h-1zM24 11h1v1h-1zM26 11h1v1h-1zM28 11h3v1h-3zM32 11h1v1h-1zM0 12h1v1h-1zM6 12h1v1h-1zM8 12h1v1h-1zM10 12h1v1h-1zM12 12h1v1h-1zM14 12h3v1h-3zM21 12h3v1h-3zM27 12h1v1h-1zM30 12h1v1h-1zM32 12h1v1h-1zM0 13h3v1h-3zM4 13h2v1h-2zM7 13h1v1h-1zM10 13h2v1h-2zM14 13h1v1h-1zM19 13h1v1h-1zM21 13h1v1h-1zM23 13h3v1h-3zM0 14h2v1h-2zM4 14h3v1h-3zM9 14h1v1h-1zM12 14h2v1h-2zM15 14h2v1h-2zM20 14h1v1h-1zM22 14h2v1h-2zM26 14h1v1h-1zM28 14h1v1h-1zM32 14h1v1h-1zM3 15h3v1h-3zM8 15h1v1h-1zM10 15h1v1h-1zM12 15h1v1h-1zM14 15h7v1h-7zM25 15h2v1h-2zM32 15h1v1h-1zM0 16h4v1h-4zM5 16h2v1h-2zM8 16h1v1h-1zM15 16h3v1h-3zM20 16h1v1h-1zM24 16h1v1h-1zM29 16h1v1h-1zM31 16h1v1h-1zM2 17h4v1h-4zM7 17h1v1h-1zM10 17h1v1h-1zM12 17h4v1h-4zM18 17h6v1h-6zM25 17h1v1h-1zM27 17h4v1h-4zM2 18h1v1h-1zM4 18h6v1h-6zM13 18h1v1h-1zM15 18h1v1h-1zM18 18h1v1h-1zM20 18h1v1h-1zM24 18h2v1h-2zM29 18h1v1h-1zM31 18h2v1h-2zM0 19h1v1h-1zM2 19h4v1h-4zM7 19h2v1h-2zM10 19h1v1h-1zM14 19h1v1h-1zM18 19h1v1h-1zM22 19h1v1h-1zM27 19h2v1h-2zM30 19h2v1h-2zM0 20h1v1h-1zM4 20h3v1h-3zM9 20h2v1h-2zM12 20h6v1h-6zM21 20h1v1h-1zM23 20h1v1h-1zM29 20h3v1h-3zM3 21h2v1h-2zM7 21h1v1h-1zM11 21h2v1h-2zM15 21h1v1h-1zM17 21h1v1h-1zM19 21h2v1h-2zM31 21h2v1h-2zM1 22h2v1h-2zM6 22h1v1h-1zM12 22h1v1h-1zM14 22h3v1h-3zM18 22h2v1h-2zM21 22h3v1h-3zM28 22h1v1h-1zM30 22h3v1h-3zM1 23h2v1h-2zM10 23h5v1h-5zM16 23h5v1h-5zM24 23h2v1h-2zM28 23h2v1h-2zM31 23h1v1h-1zM2 24h3v1h-3zM6 24h1v1h-1zM9 24h2v1h-2zM12 24h1v1h-1zM16 24h3v1h-3zM20 24h1v1h-1zM24 24h6v1h-6zM31 24h1v1h-1zM8 25h1v1h-1zM10 25h3v1h-3zM15 25h3v1h-3zM20 25h2v1h-2zM23 25h2v1h-2zM28 25h1v1h-1zM30 25h3v1h-3zM0 26h7v1h-7zM8 26h2v1h-2zM11 26h1v1h-1zM13 26h2v1h-2zM16 26h1v1h-1zM18 26h2v1h-2zM21 26h4v1h-4zM26 26h1v1h-1zM28 26h3v1h-3zM32 26h1v1h-1zM0 27h1v1h-1zM6 27h1v1h-1zM8 27h3v1h-3zM12 27h2v1h-2zM15 27h1v1h-1zM17 27h4v1h-4zM22 27h1v1h-1zM24 27h1v1h-1zM28 27h1v1h-1zM30 27h1v1h-1zM32 27h1v1h-1zM0 28h1v1h-1zM2 28h3v1h-3zM6 28h1v1h-1zM8 28h1v1h-1zM11 28h1v1h-1zM13 28h5v1h-5zM20 28h1v1h-1zM22 28h8v1h-8zM31 28h2v1h-2zM0 29h1v1h-1zM2 29h3v1h-3zM6 29h1v1h-1zM8 29h4v1h-4zM14 29h1v1h-1zM16 29h2v1h-2zM19 29h2v1h-2zM22 29h1v1h-1zM25 29h2v1h-2zM28 29h2v1h-2zM32 29h1v1h-1zM0 30h1v1h-1zM2 30h3v1h-3zM6 30h1v1h-1zM11 30h3v1h-3zM15 30h2v1h-2zM18 30h3v1h-3zM22 30h2v1h-2zM26 30h2v1h-2zM29 30h1v1h-1zM0 31h1v1h-1zM6 31h1v1h-1zM8 31h5v1h-5zM14 31h3v1h-3zM19 31h1v1h-1zM21 31h2v1h-2zM24 31h1v1h-1zM28 31h2v1h-2zM0 32h7v1h-7zM8 32h1v1h-1zM10 32h1v1h-1zM12 32h5v1h-5zM20 32h3v1h-3zM24 32h1v1h-1zM26 32h6v1h-6z" fill="#161616"/></svg>
<div class="a" style="left:1690.24px;top:590.64px;width:49.92000000000007px;height:26.400px;border-radius:3px;background:#f8b543"></div>
<span class="t" style="left:1699.43px;top:598.00px;font-size:11.5px;color:rgba(255,255,255,.88);letter-spacing:0.240px;">Editar</span>
<div class="a" style="left:1744.64px;top:590.64px;width:62.24000000000001px;height:26.400px;border-radius:3px;background:#f16942"></div>
<span class="t" style="left:1754.06px;top:598.00px;font-size:11.5px;color:rgba(255,255,255,.88);letter-spacing:0.219px;transform:scaleX(1.029);">Eliminar</span>
<span class="t" style="left:298.31px;top:703.00px;font-size:13.5px;color:#50575f;letter-spacing:-0.473px;transform:scaleX(1.044);">18</span>
<div class="a th" style="left:367.52px;top:684.32px;width:48px;height:48px"></div>
<div class="a im" style="left:371.36px;top:689.62px;background:linear-gradient(180deg,#176fd2 0,#1f86ea 45%,#1b7de0 100%)"><i style="left:15.500px;top:11.500px;width:7px;height:7px;border-radius:50%;background:#2b2330"></i><i style="left:14px;top:18px;width:11px;height:15px;border-radius:3px;background:#e4e9f2"></i><i style="left:3px;top:18.500px;width:12px;height:9px;border-radius:4px;background:#27324a;transform:rotate(28deg)"></i><i style="left:15.500px;top:32px;width:8px;height:8px;background:#23356e"></i><i style="left:30px;top:12.500px;width:5px;height:7.500px;border-radius:2px;background:#c5dcf2"></i><i style="left:23px;top:22px;width:8px;height:4px;background:#7a3f6a;transform:rotate(-30deg)"></i><i style="left:18px;top:20px;width:4px;height:10px;background:#b8434f;opacity:.55"></i></div>
<span class="t" style="left:500.62px;top:703.00px;font-size:13.5px;color:#50575f;letter-spacing:0.297px;transform:scaleX(1.036);">Kit de Herramientas</span>
<span class="t" style="left:735.49px;top:703.00px;font-size:13.5px;color:#50575f;letter-spacing:0.297px;transform:scaleX(1.069);">Laptops</span>
<span class="t" style="left:883.56px;top:703.00px;font-size:13.5px;color:#50575f;letter-spacing:0.297px;transform:scaleX(1.044);">25.00</span>
<span class="t" style="left:985.33px;top:703.00px;font-size:13.5px;color:#50575f;letter-spacing:-0.201px;">13583</span>
<span class="t" style="left:1116.24px;top:703.00px;font-size:13.5px;color:#50575f;letter-spacing:0.171px;transform:scaleX(1.088);">Available</span>
<div class="a" style="left:1223.36px;top:697.6600000000001px;width:123.04000000000019px;height:22.600px;border-radius:4px;background:rgba(240,101,72,.16)"></div>
<span class="t" style="left:1232.26px;top:706.00px;font-size:10px;color:#f06548;letter-spacing:0.214px;transform:scaleX(1.089);-webkit-text-stroke:.4px #f06548;">07/02/2025 - Vencido</span>
<div class="a th" style="left:1427.2px;top:694.8px;width:80.63999999999987px;height:28px"></div>
<svg style="left:1432.0px;top:698.5200000000001px" width="70.7" height="19.6" viewBox="0 0 70.7 19.6" fill="#141414"><rect x="0.0" width="4.4" height="19.6" fill-opacity="0.82"/><rect x="7.6" width="1.7" height="19.6" fill-opacity="0.90"/><rect x="14.0" width="2.5" height="19.6" fill-opacity="0.95"/><rect x="18.8" width="3.7" height="19.6" fill-opacity="0.97"/><rect x="24.0" width="4.4" height="19.6" fill-opacity="0.45"/><rect x="32.0" width="3.3" height="19.6" fill-opacity="1.00"/><rect x="36.0" width="2.5" height="19.6" fill-opacity="1.00"/><rect x="41.2" width="4.4" height="19.6" fill-opacity="0.55"/><rect x="44.0" width="5.6" height="19.6" fill-opacity="0.70"/><rect x="54.0" width="2.8" height="19.6" fill-opacity="0.75"/><rect x="60.8" width="4.0" height="19.6" fill-opacity="1.00"/><rect x="64.8" width="5.6" height="19.6" fill-opacity="0.62"/></svg>
<div class="a th" style="left:1559.36px;top:669.6px;width:79.36000000000013px;height:79.36px"></div>
<svg style="left:1562.88px;top:673.76px" width="70.7" height="70.7" viewBox="0 0 33 33" shape-rendering="crispEdges"><path d="M0 0h7v1h-7zM10 0h2v1h-2zM13 0h1v1h-1zM15 0h4v1h-4zM22 0h1v1h-1zM24 0h1v1h-1zM26 0h7v1h-7zM0 1h1v1h-1zM6 1h1v1h-1zM8 1h1v1h-1zM10 1h1v1h-1zM12 1h1v1h-1zM15 1h3v1h-3zM19 1h3v1h-3zM23 1h2v1h-2zM26 1h1v1h-1zM32 1h1v1h-1zM0 2h1v1h-1zM2 2h3v1h-3zM6 2h1v1h-1zM8 2h1v1h-1zM10 2h2v1h-2zM15 2h2v1h-2zM19 2h2v1h-2zM23 2h1v1h-1zM26 2h1v1h-1zM28 2h3v1h-3zM32 2h1v1h-1zM0 3h1v1h-1zM2 3h3v1h-3zM6 3h1v1h-1zM8 3h2v1h-2zM11 3h2v1h-2zM14 3h1v1h-1zM16 3h1v1h-1zM18 3h2v1h-2zM21 3h1v1h-1zM26 3h1v1h-1zM28 3h3v1h-3zM32 3h1v1h-1zM0 4h1v1h-1zM2 4h3v1h-3zM6 4h1v1h-1zM9 4h1v1h-1zM11 4h1v1h-1zM15 4h3v1h-3zM19 4h1v1h-1zM21 4h1v1h-1zM23 4h2v1h-2zM26 4h1v1h-1zM28 4h3v1h-3zM32 4h1v1h-1zM0 5h1v1h-1zM6 5h1v1h-1zM8 5h1v1h-1zM11 5h1v1h-1zM14 5h1v1h-1zM16 5h2v1h-2zM19 5h1v1h-1zM21 5h1v1h-1zM23 5h1v1h-1zM26 5h1v1h-1zM32 5h1v1h-1zM0 6h7v1h-7zM8 6h1v1h-1zM10 6h1v1h-1zM12 6h1v1h-1zM14 6h1v1h-1zM16 6h1v1h-1zM18 6h1v1h-1zM20 6h1v1h-1zM22 6h1v1h-1zM24 6h1v1h-1zM26 6h7v1h-7zM8 7h1v1h-1zM10 7h2v1h-2zM14 7h4v1h-4zM0 8h4v1h-4zM6 8h5v1h-5zM12 8h1v1h-1zM15 8h1v1h-1zM17 8h2v1h-2zM23 8h1v1h-1zM25 8h2v1h-2zM28 8h1v1h-1zM30 8h1v1h-1zM32 8h1v1h-1zM0 9h1v1h-1zM2 9h1v1h-1zM4 9h2v1h-2zM7 9h4v1h-4zM14 9h1v1h-1zM16 9h2v1h-2zM19 9h5v1h-5zM27 9h1v1h-1zM29 9h2v1h-2zM2 10h3v1h-3zM6 10h2v1h-2zM9 10h1v1h-1zM13 10h2v1h-2zM17 10h3v1h-3zM22 10h2v1h-2zM25 10h1v1h-1zM30 10h2v1h-2zM0 11h2v1h-2zM7 11h2v1h-2zM12 11h1v1h-1zM18 11h2v1h-2zM22 11h1v1h-1zM24 11h5v1h-5zM30 11h1v1h-1zM32 11h1v1h-1zM0 12h2v1h-2zM3 12h1v1h-1zM6 12h1v1h-1zM10 12h2v1h-2zM13 12h4v1h-4zM19 12h1v1h-1zM22 12h1v1h-1zM25 12h4v1h-4zM30 12h1v1h-1zM32 12h1v1h-1zM0 13h6v1h-6zM8 13h1v1h-1zM10 13h1v1h-1zM13 13h1v1h-1zM15 13h3v1h-3zM20 13h1v1h-1zM23 13h1v1h-1zM27 13h1v1h-1zM29 13h1v1h-1zM31 13h1v1h-1zM1 14h2v1h-2zM4 14h1v1h-1zM6 14h3v1h-3zM12 14h1v1h-1zM16 14h4v1h-4zM21 14h1v1h-1zM23 14h1v1h-1zM27 14h4v1h-4zM2 15h4v1h-4zM8 15h1v1h-1zM10 15h2v1h-2zM13 15h1v1h-1zM17 15h1v1h-1zM20 15h2v1h-2zM23 15h1v1h-1zM26 15h1v1h-1zM29 15h1v1h-1zM32 15h1v1h-1zM0 16h2v1h-2zM4 16h3v1h-3zM8 16h1v1h-1zM14 16h2v1h-2zM17 16h1v1h-1zM21 16h2v1h-2zM24 16h3v1h-3zM28 16h1v1h-1zM30 16h1v1h-1zM0 17h2v1h-2zM3 17h1v1h-1zM7 17h1v1h-1zM11 17h3v1h-3zM15 17h3v1h-3zM21 17h1v1h-1zM24 17h4v1h-4zM29 17h2v1h-2zM32 17h1v1h-1zM2 18h3v1h-3zM6 18h1v1h-1zM8 18h1v1h-1zM10 18h1v1h-1zM12 18h2v1h-2zM15 18h1v1h-1zM18 18h2v1h-2zM21 18h2v1h-2zM25 18h1v1h-1zM28 18h2v1h-2zM31 18h1v1h-1zM0 19h6v1h-6zM10 19h1v1h-1zM12 19h2v1h-2zM15 19h2v1h-2zM18 19h3v1h-3zM23 19h2v1h-2zM26 19h1v1h-1zM30 19h3v1h-3zM1 20h4v1h-4zM6 20h1v1h-1zM9 20h1v1h-1zM16 20h10v1h-10zM28 20h1v1h-1zM30 20h1v1h-1zM1 21h1v1h-1zM3 21h1v1h-1zM5 21h1v1h-1zM7 21h2v1h-2zM10 21h1v1h-1zM12 21h2v1h-2zM16 21h1v1h-1zM18 21h2v1h-2zM27 21h1v1h-1zM29 21h1v1h-1zM31 21h2v1h-2zM0 22h2v1h-2zM5 22h5v1h-5zM11 22h6v1h-6zM18 22h1v1h-1zM21 22h1v1h-1zM23 22h2v1h-2zM26 22h3v1h-3zM31 22h1v1h-1zM1 23h5v1h-5zM9 23h1v1h-1zM12 23h2v1h-2zM17 23h1v1h-1zM19 23h6v1h-6zM26 23h7v1h-7zM0 24h9v1h-9zM14 24h1v1h-1zM16 24h6v1h-6zM23 24h7v1h-7zM8 25h1v1h-1zM11 25h2v1h-2zM15 25h3v1h-3zM24 25h1v1h-1zM28 25h2v1h-2zM32 25h1v1h-1zM0 26h7v1h-7zM12 26h3v1h-3zM16 26h2v1h-2zM20 26h5v1h-5zM26 26h1v1h-1zM28 26h2v1h-2zM31 26h1v1h-1zM0 27h1v1h-1zM6 27h1v1h-1zM8 27h1v1h-1zM10 27h1v1h-1zM12 27h3v1h-3zM16 27h1v1h-1zM18 27h1v1h-1zM20 27h1v1h-1zM24 27h1v1h-1zM28 27h2v1h-2zM31 27h2v1h-2zM0 28h1v1h-1zM2 28h3v1h-3zM6 28h1v1h-1zM9 28h1v1h-1zM12 28h1v1h-1zM16 28h1v1h-1zM19 28h1v1h-1zM22 28h1v1h-1zM24 28h6v1h-6zM31 28h2v1h-2zM0 29h1v1h-1zM2 29h3v1h-3zM6 29h1v1h-1zM10 29h3v1h-3zM14 29h1v1h-1zM16 29h2v1h-2zM19 29h1v1h-1zM22 29h1v1h-1zM24 29h2v1h-2zM29 29h2v1h-2zM0 30h1v1h-1zM2 30h3v1h-3zM6 30h1v1h-1zM8 30h1v1h-1zM12 30h1v1h-1zM19 30h3v1h-3zM24 30h2v1h-2zM29 30h1v1h-1zM0 31h1v1h-1zM6 31h1v1h-1zM8 31h1v1h-1zM11 31h2v1h-2zM16 31h4v1h-4zM25 31h1v1h-1zM28 31h2v1h-2zM31 31h1v1h-1zM0 32h7v1h-7zM9 32h1v1h-1zM12 32h1v1h-1zM19 32h1v1h-1zM21 32h1v1h-1zM26 32h2v1h-2zM30 32h3v1h-3z" fill="#161616"/></svg>
<div class="a" style="left:1690.24px;top:695.12px;width:49.92000000000007px;height:26.400px;border-radius:3px;background:#f8b543"></div>
<span class="t" style="left:1699.43px;top:702.00px;font-size:11.5px;color:rgba(255,255,255,.88);letter-spacing:0.240px;">Editar</span>
<div class="a" style="left:1744.64px;top:695.12px;width:62.24000000000001px;height:26.400px;border-radius:3px;background:#f16942"></div>
<span class="t" style="left:1754.06px;top:702.00px;font-size:11.5px;color:rgba(255,255,255,.88);letter-spacing:0.219px;transform:scaleX(1.029);">Eliminar</span>
<span class="t" style="left:299.51px;top:807.00px;font-size:13.5px;color:#50575f;letter-spacing:-0.473px;transform:scaleX(0.899);">17</span>
<div class="a th" style="left:367.52px;top:789.76px;width:48px;height:48px"></div>
<div class="a im" style="left:371.36px;top:795.06px;background:linear-gradient(180deg,#0d6d42 0,#108650 40%,#0f7a4a 100%)"><i style="left:21.500px;top:13.500px;width:12.500px;height:22.500px;border-radius:2px;background:#d8e8df"></i><i style="left:23.500px;top:22px;width:8.500px;height:10px;background:#eee0b4"></i><i style="left:4px;top:8px;width:15px;height:25px;border-radius:6px;background:#21443a"></i><i style="left:8px;top:12px;width:6px;height:13px;border-radius:3px;background:#93a19c"></i><i style="left:6px;top:2px;width:7px;height:7px;border-radius:50%;background:#2fc16c"></i><i style="left:14px;top:6px;width:6px;height:8px;border-radius:3px;background:#28a85c"></i><i style="left:0;top:33px;width:20px;height:6px;background:#2f9d6a"></i><i style="left:35px;top:14px;width:4px;height:20px;background:#1d3e5a;opacity:.7"></i></div>
<span class="t" style="left:500.66px;top:807.00px;font-size:13.5px;color:#50575f;letter-spacing:0.214px;transform:scaleX(1.079);">Case Gaming</span>
<span class="t" style="left:735.30px;top:807.00px;font-size:13.5px;color:#50575f;letter-spacing:0.297px;transform:scaleX(1.097);">Componentes</span>
<span class="t" style="left:883.71px;top:807.00px;font-size:13.5px;color:#50575f;letter-spacing:0.297px;transform:scaleX(1.036);">80.00</span>
<span class="t" style="left:985.31px;top:807.00px;font-size:13.5px;color:#50575f;letter-spacing:0.099px;">12953</span>
<span class="t" style="left:1116.24px;top:807.00px;font-size:13.5px;color:#50575f;letter-spacing:0.171px;transform:scaleX(1.088);">Available</span>
<div class="a" style="left:1223.36px;top:803.1px;width:134.4000000000001px;height:22.600px;border-radius:4px;background:rgba(247,184,75,.14)"></div>
<span class="t" style="left:1232.20px;top:810.00px;font-size:10px;color:#f5b142;letter-spacing:0.203px;transform:scaleX(1.073);-webkit-text-stroke:.4px #f5b142;">07/03/2025 - Por vencer</span>
<div class="a th" style="left:1427.2px;top:800.24px;width:80.63999999999987px;height:28px"></div>
<svg style="left:1432.0px;top:803.96px" width="70.7" height="19.6" viewBox="0 0 70.7 19.6" fill="#141414"><rect x="0.0" width="4.4" height="19.6" fill-opacity="0.82"/><rect x="7.6" width="1.7" height="19.6" fill-opacity="0.90"/><rect x="14.0" width="2.5" height="19.6" fill-opacity="0.95"/><rect x="18.8" width="3.7" height="19.6" fill-opacity="0.97"/><rect x="23.2" width="4.4" height="19.6" fill-opacity="0.45"/><rect x="31.2" width="3.3" height="19.6" fill-opacity="0.85"/><rect x="36.0" width="2.5" height="19.6" fill-opacity="0.70"/><rect x="40.4" width="4.4" height="19.6" fill-opacity="0.55"/><rect x="44.0" width="5.6" height="19.6" fill-opacity="1.00"/><rect x="54.8" width="2.8" height="19.6" fill-opacity="0.75"/><rect x="60.8" width="4.0" height="19.6" fill-opacity="1.00"/><rect x="64.8" width="5.6" height="19.6" fill-opacity="0.62"/></svg>
<div class="a th" style="left:1559.36px;top:775.04px;width:79.36000000000013px;height:79.36px"></div>
<svg style="left:1562.88px;top:779.2px" width="70.7" height="70.7" viewBox="0 0 33 33" shape-rendering="crispEdges"><path d="M0 0h7v1h-7zM9 0h2v1h-2zM13 0h1v1h-1zM16 0h2v1h-2zM19 0h1v1h-1zM22 0h1v1h-1zM26 0h7v1h-7zM0 1h1v1h-1zM6 1h1v1h-1zM8 1h4v1h-4zM16 1h1v1h-1zM18 1h1v1h-1zM20 1h1v1h-1zM22 1h2v1h-2zM26 1h1v1h-1zM32 1h1v1h-1zM0 2h1v1h-1zM2 2h3v1h-3zM6 2h1v1h-1zM8 2h1v1h-1zM10 2h4v1h-4zM15 2h1v1h-1zM18 2h1v1h-1zM23 2h2v1h-2zM26 2h1v1h-1zM28 2h3v1h-3zM32 2h1v1h-1zM0 3h1v1h-1zM2 3h3v1h-3zM6 3h1v1h-1zM8 3h1v1h-1zM10 3h5v1h-5zM18 3h1v1h-1zM21 3h2v1h-2zM26 3h1v1h-1zM28 3h3v1h-3zM32 3h1v1h-1zM0 4h1v1h-1zM2 4h3v1h-3zM6 4h1v1h-1zM9 4h1v1h-1zM12 4h6v1h-6zM20 4h1v1h-1zM24 4h1v1h-1zM26 4h1v1h-1zM28 4h3v1h-3zM32 4h1v1h-1zM0 5h1v1h-1zM6 5h1v1h-1zM8 5h1v1h-1zM11 5h1v1h-1zM13 5h5v1h-5zM19 5h4v1h-4zM26 5h1v1h-1zM32 5h1v1h-1zM0 6h7v1h-7zM8 6h1v1h-1zM10 6h1v1h-1zM12 6h1v1h-1zM14 6h1v1h-1zM16 6h1v1h-1zM18 6h1v1h-1zM20 6h1v1h-1zM22 6h1v1h-1zM24 6h1v1h-1zM26 6h7v1h-7zM8 7h1v1h-1zM10 7h3v1h-3zM14 7h2v1h-2zM21 7h1v1h-1zM24 7h1v1h-1zM3 8h5v1h-5zM9 8h2v1h-2zM12 8h2v1h-2zM15 8h1v1h-1zM17 8h5v1h-5zM23 8h1v1h-1zM26 8h1v1h-1zM29 8h2v1h-2zM32 8h1v1h-1zM0 9h1v1h-1zM2 9h2v1h-2zM5 9h1v1h-1zM9 9h1v1h-1zM14 9h2v1h-2zM18 9h1v1h-1zM20 9h1v1h-1zM22 9h3v1h-3zM26 9h1v1h-1zM29 9h1v1h-1zM31 9h1v1h-1zM0 10h1v1h-1zM3 10h1v1h-1zM6 10h3v1h-3zM10 10h2v1h-2zM14 10h1v1h-1zM16 10h4v1h-4zM22 10h4v1h-4zM30 10h3v1h-3zM0 11h2v1h-2zM3 11h1v1h-1zM5 11h1v1h-1zM7 11h5v1h-5zM13 11h3v1h-3zM22 11h2v1h-2zM29 11h2v1h-2zM32 11h1v1h-1zM1 12h1v1h-1zM3 12h2v1h-2zM6 12h1v1h-1zM8 12h1v1h-1zM10 12h1v1h-1zM14 12h1v1h-1zM16 12h7v1h-7zM27 12h1v1h-1zM29 12h1v1h-1zM31 12h2v1h-2zM3 13h1v1h-1zM8 13h1v1h-1zM11 13h1v1h-1zM16 13h5v1h-5zM23 13h1v1h-1zM25 13h1v1h-1zM27 13h3v1h-3zM1 14h1v1h-1zM6 14h1v1h-1zM8 14h1v1h-1zM10 14h1v1h-1zM12 14h7v1h-7zM20 14h4v1h-4zM25 14h1v1h-1zM28 14h1v1h-1zM30 14h1v1h-1zM32 14h1v1h-1zM1 15h3v1h-3zM5 15h1v1h-1zM7 15h2v1h-2zM13 15h1v1h-1zM18 15h2v1h-2zM24 15h1v1h-1zM26 15h5v1h-5zM1 16h1v1h-1zM5 16h4v1h-4zM10 16h1v1h-1zM13 16h2v1h-2zM16 16h1v1h-1zM18 16h5v1h-5zM24 16h3v1h-3zM28 16h3v1h-3zM0 17h2v1h-2zM3 17h1v1h-1zM5 17h1v1h-1zM10 17h3v1h-3zM14 17h1v1h-1zM16 17h2v1h-2zM20 17h2v1h-2zM25 17h1v1h-1zM27 17h4v1h-4zM32 17h1v1h-1zM2 18h1v1h-1zM6 18h1v1h-1zM12 18h1v1h-1zM14 18h2v1h-2zM17 18h5v1h-5zM24 18h1v1h-1zM1 19h1v1h-1zM11 19h1v1h-1zM16 19h1v1h-1zM18 19h7v1h-7zM26 19h2v1h-2zM32 19h1v1h-1zM6 20h4v1h-4zM11 20h1v1h-1zM13 20h4v1h-4zM18 20h2v1h-2zM21 20h1v1h-1zM26 20h2v1h-2zM29 20h1v1h-1zM0 21h1v1h-1zM2 21h4v1h-4zM7 21h2v1h-2zM10 21h7v1h-7zM18 21h2v1h-2zM22 21h1v1h-1zM24 21h1v1h-1zM28 21h1v1h-1zM30 21h1v1h-1zM0 22h2v1h-2zM4 22h1v1h-1zM6 22h1v1h-1zM12 22h1v1h-1zM16 22h1v1h-1zM18 22h2v1h-2zM21 22h1v1h-1zM23 22h3v1h-3zM29 22h1v1h-1zM32 22h1v1h-1zM0 23h1v1h-1zM3 23h3v1h-3zM7 23h1v1h-1zM9 23h2v1h-2zM12 23h1v1h-1zM14 23h1v1h-1zM17 23h2v1h-2zM22 23h2v1h-2zM25 23h2v1h-2zM29 23h1v1h-1zM31 23h1v1h-1zM1 24h1v1h-1zM5 24h3v1h-3zM9 24h1v1h-1zM12 24h1v1h-1zM14 24h1v1h-1zM17 24h1v1h-1zM20 24h1v1h-1zM22 24h7v1h-7zM8 25h3v1h-3zM13 25h1v1h-1zM15 25h3v1h-3zM20 25h1v1h-1zM22 25h3v1h-3zM28 25h5v1h-5zM0 26h7v1h-7zM8 26h4v1h-4zM13 26h1v1h-1zM15 26h1v1h-1zM17 26h2v1h-2zM21 26h4v1h-4zM26 26h1v1h-1zM28 26h1v1h-1zM32 26h1v1h-1zM0 27h1v1h-1zM6 27h1v1h-1zM8 27h1v1h-1zM13 27h1v1h-1zM16 27h1v1h-1zM19 27h2v1h-2zM24 27h1v1h-1zM28 27h2v1h-2zM0 28h1v1h-1zM2 28h3v1h-3zM6 28h1v1h-1zM9 28h1v1h-1zM11 28h2v1h-2zM15 28h1v1h-1zM17 28h4v1h-4zM22 28h1v1h-1zM24 28h5v1h-5zM30 28h1v1h-1zM32 28h1v1h-1zM0 29h1v1h-1zM2 29h3v1h-3zM6 29h1v1h-1zM8 29h1v1h-1zM11 29h1v1h-1zM14 29h3v1h-3zM18 29h4v1h-4zM23 29h6v1h-6zM0 30h1v1h-1zM2 30h3v1h-3zM6 30h1v1h-1zM9 30h2v1h-2zM13 30h1v1h-1zM15 30h2v1h-2zM18 30h2v1h-2zM23 30h3v1h-3zM28 30h2v1h-2zM31 30h2v1h-2zM0 31h1v1h-1zM6 31h1v1h-1zM8 31h2v1h-2zM11 31h1v1h-1zM16 31h5v1h-5zM22 31h1v1h-1zM25 31h3v1h-3zM29 31h2v1h-2zM32 31h1v1h-1zM0 32h7v1h-7zM15 32h3v1h-3zM22 32h2v1h-2zM26 32h4v1h-4zM31 32h1v1h-1z" fill="#161616"/></svg>
<div class="a" style="left:1690.24px;top:800.56px;width:49.92000000000007px;height:26.400px;border-radius:3px;background:#f8b543"></div>
<span class="t" style="left:1699.43px;top:808.00px;font-size:11.5px;color:rgba(255,255,255,.88);letter-spacing:0.240px;">Editar</span>
<div class="a" style="left:1744.64px;top:800.56px;width:62.24000000000001px;height:26.400px;border-radius:3px;background:#f16942"></div>
<span class="t" style="left:1754.06px;top:808.00px;font-size:11.5px;color:rgba(255,255,255,.88);letter-spacing:0.219px;transform:scaleX(1.029);">Eliminar</span>
<span class="t" style="left:298.29px;top:913.00px;font-size:13.5px;color:#50575f;letter-spacing:0.297px;transform:scaleX(1.071);">16</span>
<div class="a th" style="left:367.52px;top:893.92px;width:48px;height:48px"></div>
<div class="a im" style="left:371.36px;top:899.2199999999999px;background:linear-gradient(180deg,#4a1788 0,#5c1d9b 12%,#7d2fbc 18%,#782cb6 28%,#6420a2 36%,#5a1c98 100%)"><i style="left:4.500px;top:14px;width:25px;height:17.500px;background:#f3eef9"></i><i style="left:7.500px;top:18px;width:17px;height:10px;background:#fff"></i><i style="left:25px;top:17px;width:13px;height:22px;border-radius:6px 6px 0 0;background:#544b44"></i><i style="left:29px;top:12px;width:6.500px;height:7.500px;border-radius:3px;background:#4a3a34"></i><i style="left:7px;top:9px;width:22px;height:2px;background:#c9a7ea;opacity:.6"></i></div>
<span class="t" style="left:500.20px;top:913.00px;font-size:13.5px;color:#50575f;letter-spacing:-0.444px;transform:scaleX(0.964);">SSD 512GB</span>
<span class="t" style="left:735.49px;top:913.00px;font-size:13.5px;color:#50575f;letter-spacing:0.297px;transform:scaleX(1.073);">Monitores</span>
<span class="t" style="left:883.18px;top:913.00px;font-size:13.5px;color:#50575f;letter-spacing:0.297px;transform:scaleX(1.017);">70.00</span>
<span class="t" style="left:985.31px;top:913.00px;font-size:13.5px;color:#50575f;letter-spacing:0.091px;">13248</span>
<span class="t" style="left:1116.24px;top:913.00px;font-size:13.5px;color:#50575f;letter-spacing:0.171px;transform:scaleX(1.088);">Available</span>
<div class="a" style="left:1223.36px;top:907.26px;width:134.4000000000001px;height:22.600px;border-radius:4px;background:rgba(247,184,75,.14)"></div>
<span class="t" style="left:1232.20px;top:914.00px;font-size:10px;color:#f5b142;letter-spacing:0.203px;transform:scaleX(1.073);-webkit-text-stroke:.4px #f5b142;">07/03/2025 - Por vencer</span>
<div class="a th" style="left:1427.2px;top:904.4px;width:80.63999999999987px;height:28px"></div>
<svg style="left:1432.0px;top:908.12px" width="70.7" height="19.6" viewBox="0 0 70.7 19.6" fill="#141414"><rect x="0.0" width="4.4" height="19.6" fill-opacity="0.82"/><rect x="7.6" width="1.7" height="19.6" fill-opacity="0.90"/><rect x="14.0" width="2.5" height="19.6" fill-opacity="0.95"/><rect x="18.8" width="3.7" height="19.6" fill-opacity="0.97"/><rect x="24.0" width="4.4" height="19.6" fill-opacity="0.55"/><rect x="31.2" width="3.3" height="19.6" fill-opacity="1.00"/><rect x="36.8" width="2.5" height="19.6" fill-opacity="0.85"/><rect x="40.4" width="4.4" height="19.6" fill-opacity="0.70"/><rect x="44.8" width="5.6" height="19.6" fill-opacity="0.85"/><rect x="54.0" width="2.8" height="19.6" fill-opacity="0.90"/><rect x="60.8" width="4.0" height="19.6" fill-opacity="1.00"/><rect x="64.8" width="5.6" height="19.6" fill-opacity="0.62"/></svg>
<div class="a th" style="left:1559.36px;top:879.2px;width:79.36000000000013px;height:79.36px"></div>
<svg style="left:1562.88px;top:883.36px" width="70.7" height="70.7" viewBox="0 0 33 33" shape-rendering="crispEdges"><path d="M0 0h7v1h-7zM10 0h3v1h-3zM15 0h1v1h-1zM20 0h2v1h-2zM23 0h2v1h-2zM26 0h7v1h-7zM0 1h1v1h-1zM6 1h1v1h-1zM8 1h3v1h-3zM12 1h1v1h-1zM14 1h1v1h-1zM17 1h2v1h-2zM20 1h1v1h-1zM22 1h2v1h-2zM26 1h1v1h-1zM32 1h1v1h-1zM0 2h1v1h-1zM2 2h3v1h-3zM6 2h1v1h-1zM8 2h1v1h-1zM10 2h4v1h-4zM16 2h1v1h-1zM18 2h2v1h-2zM22 2h1v1h-1zM24 2h1v1h-1zM26 2h1v1h-1zM28 2h3v1h-3zM32 2h1v1h-1zM0 3h1v1h-1zM2 3h3v1h-3zM6 3h1v1h-1zM8 3h1v1h-1zM11 3h2v1h-2zM15 3h1v1h-1zM19 3h3v1h-3zM23 3h1v1h-1zM26 3h1v1h-1zM28 3h3v1h-3zM32 3h1v1h-1zM0 4h1v1h-1zM2 4h3v1h-3zM6 4h1v1h-1zM8 4h4v1h-4zM13 4h2v1h-2zM20 4h3v1h-3zM26 4h1v1h-1zM28 4h3v1h-3zM32 4h1v1h-1zM0 5h1v1h-1zM6 5h1v1h-1zM11 5h1v1h-1zM16 5h1v1h-1zM19 5h1v1h-1zM24 5h1v1h-1zM26 5h1v1h-1zM32 5h1v1h-1zM0 6h7v1h-7zM8 6h1v1h-1zM10 6h1v1h-1zM12 6h1v1h-1zM14 6h1v1h-1zM16 6h1v1h-1zM18 6h1v1h-1zM20 6h1v1h-1zM22 6h1v1h-1zM24 6h1v1h-1zM26 6h7v1h-7zM10 7h3v1h-3zM14 7h1v1h-1zM17 7h1v1h-1zM19 7h4v1h-4zM24 7h1v1h-1zM1 8h9v1h-9zM14 8h1v1h-1zM17 8h1v1h-1zM20 8h2v1h-2zM24 8h1v1h-1zM29 8h1v1h-1zM31 8h1v1h-1zM3 9h1v1h-1zM9 9h1v1h-1zM12 9h3v1h-3zM17 9h2v1h-2zM20 9h1v1h-1zM22 9h2v1h-2zM25 9h3v1h-3zM32 9h1v1h-1zM1 10h2v1h-2zM4 10h1v1h-1zM6 10h1v1h-1zM10 10h2v1h-2zM14 10h1v1h-1zM19 10h1v1h-1zM21 10h1v1h-1zM23 10h1v1h-1zM25 10h2v1h-2zM29 10h1v1h-1zM31 10h1v1h-1zM0 11h1v1h-1zM3 11h3v1h-3zM9 11h3v1h-3zM14 11h1v1h-1zM16 11h3v1h-3zM20 11h2v1h-2zM23 11h1v1h-1zM25 11h4v1h-4zM30 11h3v1h-3zM1 12h2v1h-2zM6 12h1v1h-1zM9 12h1v1h-1zM13 12h2v1h-2zM16 12h1v1h-1zM19 12h2v1h-2zM22 12h2v1h-2zM25 12h1v1h-1zM27 12h2v1h-2zM30 12h2v1h-2zM2 13h2v1h-2zM5 13h1v1h-1zM7 13h4v1h-4zM12 13h1v1h-1zM14 13h3v1h-3zM20 13h2v1h-2zM23 13h1v1h-1zM25 13h4v1h-4zM30 13h1v1h-1zM0 14h2v1h-2zM3 14h5v1h-5zM13 14h1v1h-1zM15 14h1v1h-1zM18 14h1v1h-1zM23 14h1v1h-1zM29 14h1v1h-1zM31 14h2v1h-2zM0 15h3v1h-3zM5 15h1v1h-1zM8 15h1v1h-1zM12 15h1v1h-1zM18 15h1v1h-1zM21 15h7v1h-7zM30 15h1v1h-1zM3 16h1v1h-1zM6 16h1v1h-1zM8 16h4v1h-4zM13 16h1v1h-1zM15 16h1v1h-1zM18 16h2v1h-2zM22 16h1v1h-1zM24 16h5v1h-5zM30 16h1v1h-1zM0 17h1v1h-1zM3 17h1v1h-1zM5 17h1v1h-1zM8 17h1v1h-1zM12 17h1v1h-1zM16 17h1v1h-1zM18 17h3v1h-3zM22 17h2v1h-2zM25 17h2v1h-2zM28 17h1v1h-1zM1 18h2v1h-2zM6 18h2v1h-2zM13 18h2v1h-2zM18 18h4v1h-4zM23 18h1v1h-1zM25 18h2v1h-2zM30 18h3v1h-3zM0 19h1v1h-1zM3 19h2v1h-2zM8 19h3v1h-3zM12 19h1v1h-1zM15 19h1v1h-1zM19 19h3v1h-3zM23 19h2v1h-2zM26 19h1v1h-1zM28 19h1v1h-1zM30 19h2v1h-2zM0 20h2v1h-2zM4 20h3v1h-3zM8 20h2v1h-2zM15 20h1v1h-1zM17 20h3v1h-3zM22 20h7v1h-7zM1 21h1v1h-1zM4 21h2v1h-2zM12 21h1v1h-1zM15 21h2v1h-2zM19 21h1v1h-1zM21 21h1v1h-1zM24 21h2v1h-2zM29 21h2v1h-2zM0 22h1v1h-1zM5 22h2v1h-2zM17 22h3v1h-3zM22 22h5v1h-5zM28 22h3v1h-3zM0 23h3v1h-3zM5 23h1v1h-1zM7 23h3v1h-3zM12 23h4v1h-4zM17 23h1v1h-1zM20 23h2v1h-2zM24 23h1v1h-1zM27 23h3v1h-3zM32 23h1v1h-1zM1 24h2v1h-2zM5 24h4v1h-4zM12 24h4v1h-4zM17 24h1v1h-1zM20 24h1v1h-1zM22 24h1v1h-1zM24 24h6v1h-6zM31 24h2v1h-2zM8 25h1v1h-1zM10 25h1v1h-1zM13 25h1v1h-1zM15 25h5v1h-5zM21 25h1v1h-1zM23 25h2v1h-2zM28 25h3v1h-3zM32 25h1v1h-1zM0 26h7v1h-7zM8 26h1v1h-1zM10 26h3v1h-3zM14 26h2v1h-2zM17 26h1v1h-1zM21 26h1v1h-1zM23 26h2v1h-2zM26 26h1v1h-1zM28 26h2v1h-2zM32 26h1v1h-1zM0 27h1v1h-1zM6 27h1v1h-1zM11 27h5v1h-5zM21 27h4v1h-4zM28 27h1v1h-1zM31 27h1v1h-1zM0 28h1v1h-1zM2 28h3v1h-3zM6 28h1v1h-1zM10 28h1v1h-1zM13 28h3v1h-3zM18 28h1v1h-1zM20 28h3v1h-3zM24 28h6v1h-6zM0 29h1v1h-1zM2 29h3v1h-3zM6 29h1v1h-1zM8 29h1v1h-1zM10 29h3v1h-3zM16 29h1v1h-1zM19 29h1v1h-1zM22 29h5v1h-5zM28 29h3v1h-3zM32 29h1v1h-1zM0 30h1v1h-1zM2 30h3v1h-3zM6 30h1v1h-1zM12 30h1v1h-1zM16 30h2v1h-2zM22 30h1v1h-1zM24 30h2v1h-2zM31 30h1v1h-1zM0 31h1v1h-1zM6 31h1v1h-1zM8 31h5v1h-5zM17 31h1v1h-1zM19 31h1v1h-1zM23 31h1v1h-1zM25 31h1v1h-1zM28 31h5v1h-5zM0 32h7v1h-7zM8 32h2v1h-2zM12 32h3v1h-3zM17 32h1v1h-1zM19 32h3v1h-3zM24 32h1v1h-1zM26 32h1v1h-1zM28 32h2v1h-2zM31 32h1v1h-1z" fill="#161616"/></svg>
<div class="a" style="left:1690.24px;top:904.7199999999999px;width:49.92000000000007px;height:26.400px;border-radius:3px;background:#f8b543"></div>
<span class="t" style="left:1699.43px;top:912.00px;font-size:11.5px;color:rgba(255,255,255,.88);letter-spacing:0.240px;">Editar</span>
<div class="a" style="left:1744.64px;top:904.7199999999999px;width:62.24000000000001px;height:26.400px;border-radius:3px;background:#f16942"></div>
<span class="t" style="left:1754.06px;top:912.00px;font-size:11.5px;color:rgba(255,255,255,.88);letter-spacing:0.219px;transform:scaleX(1.029);">Eliminar</span>
<span class="t" style="left:299.51px;top:1017.00px;font-size:13.5px;color:#50575f;letter-spacing:-0.473px;transform:scaleX(0.921);">15</span>
<span class="t" style="left:364.43px;top:1017.00px;font-size:13.5px;color:#8f94a3;letter-spacing:0.264px;transform:scaleX(1.075);">Sin imagen</span>
<span class="t" style="left:500.35px;top:1017.00px;font-size:13.5px;color:#50575f;letter-spacing:0.245px;transform:scaleX(1.025);">Placa Madre MSI</span>
<span class="t" style="left:735.30px;top:1017.00px;font-size:13.5px;color:#50575f;letter-spacing:0.297px;transform:scaleX(1.097);">Componentes</span>
<span class="t" style="left:883.11px;top:1017.00px;font-size:13.5px;color:#50575f;letter-spacing:0.297px;transform:scaleX(1.079);">120.00</span>
<span class="t" style="left:985.33px;top:1017.00px;font-size:13.5px;color:#50575f;letter-spacing:0.064px;">13306</span>
<span class="t" style="left:1116.24px;top:1017.00px;font-size:13.5px;color:#50575f;letter-spacing:0.171px;transform:scaleX(1.088);">Available</span>
<div class="a" style="left:1223.36px;top:1012.38px;width:123.04000000000019px;height:22.600px;border-radius:4px;background:rgba(240,101,72,.16)"></div>
<span class="t" style="left:1232.26px;top:1020.00px;font-size:10px;color:#f06548;letter-spacing:0.214px;transform:scaleX(1.089);-webkit-text-stroke:.4px #f06548;">07/02/2025 - Vencido</span>
<div class="a th" style="left:1427.2px;top:1009.52px;width:80.63999999999987px;height:28px"></div>
<svg style="left:1432.0px;top:1013.24px" width="70.7" height="19.6" viewBox="0 0 70.7 19.6" fill="#141414"><rect x="0.0" width="4.4" height="19.6" fill-opacity="0.82"/><rect x="7.6" width="1.7" height="19.6" fill-opacity="0.90"/><rect x="14.0" width="2.5" height="19.6" fill-opacity="0.95"/><rect x="18.8" width="3.7" height="19.6" fill-opacity="0.97"/><rect x="24.8" width="4.4" height="19.6" fill-opacity="0.45"/><rect x="31.2" width="3.3" height="19.6" fill-opacity="1.00"/><rect x="36.8" width="2.5" height="19.6" fill-opacity="0.70"/><rect x="41.2" width="4.4" height="19.6" fill-opacity="0.85"/><rect x="44.8" width="5.6" height="19.6" fill-opacity="1.00"/><rect x="54.0" width="2.8" height="19.6" fill-opacity="0.90"/><rect x="60.8" width="4.0" height="19.6" fill-opacity="1.00"/><rect x="64.8" width="5.6" height="19.6" fill-opacity="0.62"/></svg>
<div class="a th" style="left:1559.36px;top:984.32px;width:79.36000000000013px;height:79.36px"></div>
<svg style="left:1562.88px;top:988.48px" width="70.7" height="70.7" viewBox="0 0 33 33" shape-rendering="crispEdges"><path d="M0 0h7v1h-7zM12 0h3v1h-3zM16 0h1v1h-1zM18 0h1v1h-1zM20 0h2v1h-2zM23 0h2v1h-2zM26 0h7v1h-7zM0 1h1v1h-1zM6 1h1v1h-1zM8 1h1v1h-1zM10 1h3v1h-3zM17 1h2v1h-2zM21 1h4v1h-4zM26 1h1v1h-1zM32 1h1v1h-1zM0 2h1v1h-1zM2 2h3v1h-3zM6 2h1v1h-1zM8 2h1v1h-1zM10 2h5v1h-5zM16 2h1v1h-1zM18 2h1v1h-1zM20 2h2v1h-2zM24 2h1v1h-1zM26 2h1v1h-1zM28 2h3v1h-3zM32 2h1v1h-1zM0 3h1v1h-1zM2 3h3v1h-3zM6 3h1v1h-1zM9 3h1v1h-1zM11 3h1v1h-1zM14 3h2v1h-2zM17 3h1v1h-1zM19 3h1v1h-1zM22 3h3v1h-3zM26 3h1v1h-1zM28 3h3v1h-3zM32 3h1v1h-1zM0 4h1v1h-1zM2 4h3v1h-3zM6 4h1v1h-1zM10 4h2v1h-2zM14 4h1v1h-1zM22 4h3v1h-3zM26 4h1v1h-1zM28 4h3v1h-3zM32 4h1v1h-1zM0 5h1v1h-1zM6 5h1v1h-1zM12 5h5v1h-5zM18 5h3v1h-3zM22 5h3v1h-3zM26 5h1v1h-1zM32 5h1v1h-1zM0 6h7v1h-7zM8 6h1v1h-1zM10 6h1v1h-1zM12 6h1v1h-1zM14 6h1v1h-1zM16 6h1v1h-1zM18 6h1v1h-1zM20 6h1v1h-1zM22 6h1v1h-1zM24 6h1v1h-1zM26 6h7v1h-7zM8 7h5v1h-5zM14 7h3v1h-3zM19 7h1v1h-1zM23 7h1v1h-1zM0 8h3v1h-3zM4 8h4v1h-4zM10 8h1v1h-1zM13 8h1v1h-1zM17 8h1v1h-1zM19 8h1v1h-1zM21 8h3v1h-3zM25 8h1v1h-1zM27 8h1v1h-1zM32 8h1v1h-1zM0 9h1v1h-1zM4 9h2v1h-2zM7 9h5v1h-5zM18 9h2v1h-2zM21 9h2v1h-2zM24 9h1v1h-1zM26 9h3v1h-3zM1 10h2v1h-2zM6 10h3v1h-3zM12 10h2v1h-2zM16 10h2v1h-2zM20 10h3v1h-3zM24 10h1v1h-1zM28 10h3v1h-3zM0 11h1v1h-1zM4 11h2v1h-2zM8 11h9v1h-9zM18 11h2v1h-2zM21 11h2v1h-2zM24 11h1v1h-1zM26 11h2v1h-2zM31 11h2v1h-2zM0 12h1v1h-1zM2 12h2v1h-2zM6 12h2v1h-2zM9 12h1v1h-1zM11 12h3v1h-3zM16 12h1v1h-1zM19 12h1v1h-1zM23 12h3v1h-3zM28 12h1v1h-1zM31 12h1v1h-1zM0 13h6v1h-6zM7 13h3v1h-3zM11 13h2v1h-2zM15 13h2v1h-2zM21 13h2v1h-2zM27 13h1v1h-1zM30 13h1v1h-1zM32 13h1v1h-1zM3 14h6v1h-6zM17 14h1v1h-1zM19 14h1v1h-1zM24 14h2v1h-2zM0 15h5v1h-5zM8 15h1v1h-1zM11 15h1v1h-1zM15 15h2v1h-2zM18 15h1v1h-1zM24 15h1v1h-1zM26 15h3v1h-3zM30 15h3v1h-3zM0 16h2v1h-2zM6 16h2v1h-2zM9 16h1v1h-1zM11 16h2v1h-2zM16 16h2v1h-2zM19 16h3v1h-3zM26 16h1v1h-1zM28 16h2v1h-2zM0 17h6v1h-6zM8 17h1v1h-1zM10 17h1v1h-1zM17 17h7v1h-7zM25 17h1v1h-1zM28 17h4v1h-4zM3 18h1v1h-1zM5 18h2v1h-2zM8 18h2v1h-2zM11 18h1v1h-1zM13 18h2v1h-2zM19 18h1v1h-1zM21 18h1v1h-1zM23 18h2v1h-2zM26 18h1v1h-1zM28 18h4v1h-4zM2 19h2v1h-2zM5 19h1v1h-1zM7 19h1v1h-1zM9 19h2v1h-2zM12 19h1v1h-1zM14 19h4v1h-4zM21 19h3v1h-3zM26 19h2v1h-2zM29 19h3v1h-3zM0 20h1v1h-1zM2 20h1v1h-1zM4 20h1v1h-1zM6 20h1v1h-1zM8 20h1v1h-1zM10 20h1v1h-1zM14 20h2v1h-2zM18 20h1v1h-1zM20 20h5v1h-5zM29 20h1v1h-1zM0 21h1v1h-1zM2 21h2v1h-2zM7 21h2v1h-2zM10 21h1v1h-1zM12 21h3v1h-3zM16 21h4v1h-4zM22 21h10v1h-10zM4 22h3v1h-3zM9 22h1v1h-1zM12 22h2v1h-2zM16 22h2v1h-2zM19 22h13v1h-13zM3 23h3v1h-3zM8 23h1v1h-1zM12 23h1v1h-1zM18 23h1v1h-1zM22 23h1v1h-1zM27 23h1v1h-1zM29 23h2v1h-2zM0 24h3v1h-3zM4 24h1v1h-1zM6 24h3v1h-3zM10 24h3v1h-3zM14 24h1v1h-1zM16 24h1v1h-1zM20 24h1v1h-1zM22 24h1v1h-1zM24 24h5v1h-5zM30 24h1v1h-1zM9 25h1v1h-1zM11 25h2v1h-2zM14 25h2v1h-2zM17 25h3v1h-3zM21 25h1v1h-1zM24 25h1v1h-1zM28 25h1v1h-1zM30 25h3v1h-3zM0 26h7v1h-7zM9 26h3v1h-3zM13 26h1v1h-1zM15 26h5v1h-5zM21 26h4v1h-4zM26 26h1v1h-1zM28 26h1v1h-1zM30 26h1v1h-1zM32 26h1v1h-1zM0 27h1v1h-1zM6 27h1v1h-1zM8 27h1v1h-1zM10 27h1v1h-1zM15 27h1v1h-1zM17 27h1v1h-1zM21 27h4v1h-4zM28 27h1v1h-1zM31 27h2v1h-2zM0 28h1v1h-1zM2 28h3v1h-3zM6 28h1v1h-1zM8 28h1v1h-1zM13 28h1v1h-1zM15 28h1v1h-1zM18 28h2v1h-2zM22 28h7v1h-7zM31 28h2v1h-2zM0 29h1v1h-1zM2 29h3v1h-3zM6 29h1v1h-1zM8 29h1v1h-1zM10 29h1v1h-1zM13 29h1v1h-1zM15 29h2v1h-2zM18 29h1v1h-1zM23 29h1v1h-1zM26 29h1v1h-1zM28 29h1v1h-1zM30 29h3v1h-3zM0 30h1v1h-1zM2 30h3v1h-3zM6 30h1v1h-1zM8 30h3v1h-3zM13 30h2v1h-2zM17 30h2v1h-2zM20 30h1v1h-1zM23 30h4v1h-4zM29 30h1v1h-1zM31 30h2v1h-2zM0 31h1v1h-1zM6 31h1v1h-1zM10 31h1v1h-1zM12 31h1v1h-1zM15 31h3v1h-3zM19 31h3v1h-3zM23 31h1v1h-1zM27 31h1v1h-1zM32 31h1v1h-1zM0 32h7v1h-7zM8 32h2v1h-2zM13 32h1v1h-1zM21 32h1v1h-1zM23 32h2v1h-2zM26 32h4v1h-4zM31 32h2v1h-2z" fill="#161616"/></svg>
<div class="a" style="left:1690.24px;top:1009.8399999999999px;width:49.92000000000007px;height:26.400px;border-radius:3px;background:#f8b543"></div>
<span class="t" style="left:1699.43px;top:1017.00px;font-size:11.5px;color:rgba(255,255,255,.88);letter-spacing:0.240px;">Editar</span>
<div class="a" style="left:1744.64px;top:1009.8399999999999px;width:62.24000000000001px;height:26.400px;border-radius:3px;background:#f16942"></div>
<span class="t" style="left:1754.06px;top:1017.00px;font-size:11.5px;color:rgba(255,255,255,.88);letter-spacing:0.219px;transform:scaleX(1.029);">Eliminar</span>
</div>
<div id="tabstrip"></div><div id="toolbar"></div>
<div class="a" style="left:8px;top:7px;width:27px;height:26px;border-radius:8px;background:#333"></div>
<svg style="left:15px;top:16px" width="13" height="9" viewBox="0 0 13 9"><path d="M2 2l4.5 4.5L11 2" fill="none" stroke="#e6e6e6" stroke-width="2"/></svg>
<div class="a" style="left:43px;top:6px;width:230px;height:34px;border-radius:9px 9px 0 0;background:#3b3b3b"></div>
<div class="a" style="left:34px;top:30px;width:9px;height:9px;background:radial-gradient(circle at 0 0,transparent 8.5px,#3b3b3b 9px)"></div>
<div class="a" style="left:273px;top:30px;width:9px;height:9px;background:radial-gradient(circle at 100% 0,transparent 8.5px,#3b3b3b 9px)"></div>
<div class="a" style="left:49.500px;top:13.500px;width:15px;height:14px;border-radius:2px;background:#3a2266"></div><div class="a" style="left:52.5px;top:17.5px;width:9px;height:6px;border-radius:4.5px 4.5px 1px 1px;background:#c4b2ea"></div>
<span class="t" style="left:72.99px;top:15.00px;font-size:12px;color:#e8e8e8;letter-spacing:0.070px;">Mantenimiento de Productos</span>
<svg style="left:251.48000000000002px;top:15.48px" width="10" height="10" viewBox="0 0 10 10"><path d="M1 1l8 8M9 1l-8 8" stroke="#e0e0e0" stroke-width="1.7" fill="none"/></svg>
<div class="a" style="left:285.58px;top:11.82px;width:17px;height:17px;border-radius:50%;background:#8f8f8f;border:2.6px solid #f2f2f2"></div>
<span class="t" style="left:310.12px;top:15.00px;font-size:12px;color:#d8d8d8;letter-spacing:0.087px;-webkit-mask-image:linear-gradient(90deg,#000 86%,transparent 99%);mask-image:linear-gradient(90deg,#000 86%,transparent 99%);">Compra Venta Laravel - Mostra</span>
<svg style="left:488.92px;top:15.48px" width="10" height="10" viewBox="0 0 10 10"><path d="M1 1l8 8M9 1l-8 8" stroke="#d0d0d0" stroke-width="1.7" fill="none"/></svg>
<div class="a" style="left:512.64px;top:12px;width:1.5px;height:18px;background:#4a4a4a"></div>
<div class="a" style="left:523.02px;top:11.82px;width:17px;height:17px;border-radius:50%;background:#8f8f8f;border:2.6px solid #f2f2f2"></div>
<span class="t" style="left:546.97px;top:15.00px;font-size:12px;color:#d8d8d8;letter-spacing:-0.110px;-webkit-mask-image:linear-gradient(90deg,#000 86%,transparent 99%);mask-image:linear-gradient(90deg,#000 86%,transparent 99%);">Compra Venta Laravel - Laravel</span>
<svg style="left:725.88px;top:15.48px" width="10" height="10" viewBox="0 0 10 10"><path d="M1 1l8 8M9 1l-8 8" stroke="#d0d0d0" stroke-width="1.7" fill="none"/></svg>
<div class="a" style="left:748.8px;top:12px;width:1.5px;height:18px;background:#4a4a4a"></div>
<svg style="left:760.08px;top:14.32px" width="12" height="12" viewBox="0 0 12 12"><path d="M6 0.5v11M0.5 6h11" stroke="#e6e6e6" stroke-width="1.8"/></svg>
<div class="a" style="left:1796.2px;top:17.919999999999998px;width:14px;height:1.7px;background:#e6e6e6"></div>
<div class="a" style="left:1842.8px;top:12.719999999999999px;width:12px;height:12px;border:1.7px solid #e6e6e6;border-radius:1.5px"></div>
<svg style="left:1887.9px;top:12.219999999999999px" width="13" height="13" viewBox="0 0 13 13"><path d="M1 1l11 11M12 1L1 12" stroke="#ececec" stroke-width="1.7"/></svg>
<svg style="left:17.18px;top:56.379999999999995px" width="13" height="11.400" viewBox="0 0 16 14"><path d="M15 7H2.500M8 1L2 7l6 6" fill="none" stroke="#d6d6d6" stroke-width="2.200"/></svg>
<svg style="left:51.9px;top:56.379999999999995px" width="13" height="11.4" viewBox="0 0 16 14"><path d="M1 7h12.5M8 1l6 6-6 6" fill="none" stroke="#686868" stroke-width="2.200"/></svg>
<svg style="left:88.4px;top:55.28px" width="13.600" height="13.600" viewBox="0 0 16 16"><path d="M13.2 5.2A6 6 0 1 0 14 8.6" fill="none" stroke="#dedede" stroke-width="2"/><path d="M14.6 1.2v5.2H9.4z" fill="#dedede"/></svg>
<div class="a" style="left:122.4px;top:44.8px;width:1513.28px;height:33.44px;border-radius:16px;background:#282828"></div>
<div class="a" style="left:125.6px;top:50.4px;width:24px;height:24px;border-radius:50%;background:#3d3d3d"></div>
<svg style="left:130.6px;top:55.4px" width="14" height="14" viewBox="0 0 14 14"><circle cx="7" cy="7" r="5.9" fill="none" stroke="#e3e3e3" stroke-width="1.5"/><path d="M7 6.3v4M7 3.6v1.5" stroke="#e3e3e3" stroke-width="1.5"/></svg>
<span class="t" style="left:156.63px;top:54.00px;font-size:14px;color:#ececec;letter-spacing:-0.102px;">127.0.0.1:8000/products</span>
<svg style="left:1604.8px;top:54.08px" width="16" height="16" viewBox="0 0 16 16"><path d="M8 1.8l1.9 4 4.3.5-3.2 3 .9 4.3L8 11.4l-3.9 2.2.9-4.3-3.2-3 4.3-.5z" fill="none" stroke="#e6e6e6" stroke-width="1.6" stroke-linejoin="round"/></svg>
<div class="a" style="left:1654.4px;top:54.4px;width:17px;height:16px;border-radius:2px;background:#f4c430"></div><div class="a" style="left:1660.86px;top:57.4px;width:6px;height:10px;border-radius:3px 1px 1px 3px;background:#fff"></div><div class="a" style="left:1663.0px;top:57.9px;width:3px;height:9px;border-radius:2px 0 0 2px;background:#2b2140"></div>
<div class="a" style="left:1690.6px;top:58.4px;width:14px;height:8px;border-radius:2px;background:#2b2b2b"></div>
<svg style="left:1725.9px;top:53.58px" width="17" height="17" viewBox="0 0 17 17"><path d="M2.2 4.8h3.4a2 2 0 1 1 3.8 0h3.4v3.4a2 2 0 1 1 0 3.8v3.4H2.200v-3.6a1.900 1.900 0 1 0 0-3.400z" fill="none" stroke="#e3e3e3" stroke-width="1.6" stroke-linejoin="round"/></svg>
<div class="a" style="left:1760.48px;top:54.08px;width:1.5px;height:16px;background:#5a5a5a"></div>
<svg style="left:1779.2px;top:55.08px" width="17" height="14" viewBox="0 0 17 14"><path d="M0.5 1.6h9M0.5 5h9M0.500 8.400h5.500" stroke="#bdbdbd" stroke-width="1.7"/><path d="M12.600 1v8.500" stroke="#bdbdbd" stroke-width="1.600"/><path d="M12.600 1.300h3.700" stroke="#bdbdbd" stroke-width="1.800"/><circle cx="11" cy="10.500" r="2.300" fill="#bdbdbd"/></svg>
<svg style="left:1816.0px;top:53.58px" width="16" height="17" viewBox="0 0 16 17"><path d="M8 1v9.500M3.500 6.500L8 11l4.500-4.500M1.200 11.500v3.700h13.600v-3.700" fill="none" stroke="#e6e6e6" stroke-width="1.900"/></svg>
<div class="a" style="left:1849.2px;top:52.4px;width:20px;height:20px;border-radius:50%;background:#41286f"></div><div class="a" style="left:1853.2px;top:58.9px;width:12px;height:8px;border-radius:6px 6px 1px 1px;background:#bda9e6"></div>
<div class="a" style="left:1894.06px;top:55.4px;width:2.500px;height:2.500px;border-radius:50%;background:#d4d4d4;box-shadow:0 5.800px 0 #d4d4d4,0 11.600px 0 #d4d4d4"></div>
<svg style="left:20.8px;top:91.38px" width="15" height="15" viewBox="0 0 15 15"><g fill="none" stroke="#dcdcdc" stroke-width="1.500"><rect x="0.800" y="0.800" width="5" height="5" rx="1"/><rect x="9" y="0.800" width="5" height="5" rx="1"/><rect x="0.800" y="9" width="5" height="5" rx="1"/><rect x="9" y="9" width="5" height="5" rx="1"/></g></svg>
<div class="a" style="left:50.08px;top:90.88px;width:1.300px;height:16px;background:#666"></div>
<svg style="left:67.2px;top:91.78px" width="17" height="14.2" viewBox="0 0 17 15" preserveAspectRatio="none"><path d="M1.2 2.6a1.4 1.4 0 0 1 1.4-1.4h3.6l1.9 1.9h6.3a1.4 1.4 0 0 1 1.4 1.4v7.7a1.4 1.4 0 0 1-1.4 1.4H2.6a1.4 1.4 0 0 1-1.4-1.4z" fill="none" stroke="#dcdcdc" stroke-width="1.5"/></svg>
<span class="t" style="left:90.80px;top:93.00px;font-size:12px;color:#dedede;letter-spacing:-0.212px;">NodeJS</span>
<svg style="left:148.8px;top:91.78px" width="17" height="14.2" viewBox="0 0 17 15" preserveAspectRatio="none"><path d="M1.2 2.6a1.4 1.4 0 0 1 1.4-1.4h3.6l1.9 1.9h6.3a1.4 1.4 0 0 1 1.4 1.4v7.7a1.4 1.4 0 0 1-1.4 1.4H2.6a1.4 1.4 0 0 1-1.4-1.4z" fill="none" stroke="#dcdcdc" stroke-width="1.5"/></svg>
<span class="t" style="left:172.60px;top:93.00px;font-size:12px;color:#dedede;letter-spacing:-0.142px;">ASPNetCore</span>
<svg style="left:257.6px;top:91.78px" width="17" height="14.2" viewBox="0 0 17 15" preserveAspectRatio="none"><path d="M1.2 2.6a1.4 1.4 0 0 1 1.4-1.4h3.6l1.9 1.9h6.3a1.4 1.4 0 0 1 1.4 1.4v7.7a1.4 1.4 0 0 1-1.4 1.4H2.6a1.4 1.4 0 0 1-1.4-1.4z" fill="none" stroke="#dcdcdc" stroke-width="1.5"/></svg>
<span class="t" style="left:280.76px;top:93.00px;font-size:12px;color:#dedede;letter-spacing:-0.148px;">JavaScript</span>
<svg style="left:352.0px;top:91.78px" width="17" height="14.2" viewBox="0 0 17 15" preserveAspectRatio="none"><path d="M1.2 2.6a1.4 1.4 0 0 1 1.4-1.4h3.6l1.9 1.9h6.3a1.4 1.4 0 0 1 1.4 1.4v7.7a1.4 1.4 0 0 1-1.4 1.4H2.6a1.4 1.4 0 0 1-1.4-1.4z" fill="none" stroke="#dcdcdc" stroke-width="1.5"/></svg>
<span class="t" style="left:375.40px;top:93.00px;font-size:12px;color:#dedede;letter-spacing:0.055px;">Laravel</span>
<svg style="left:432.48px;top:91.78px" width="17" height="14.2" viewBox="0 0 17 15" preserveAspectRatio="none"><path d="M1.2 2.6a1.4 1.4 0 0 1 1.4-1.4h3.6l1.9 1.9h6.3a1.4 1.4 0 0 1 1.4 1.4v7.7a1.4 1.4 0 0 1-1.4 1.4H2.6a1.4 1.4 0 0 1-1.4-1.4z" fill="none" stroke="#dcdcdc" stroke-width="1.5"/></svg>
<span class="t" style="left:455.95px;top:93.00px;font-size:12px;color:#dedede;letter-spacing:-0.392px;transform:scaleX(0.951);">Cursos</span>
<svg style="left:508.8px;top:91.78px" width="17" height="14.2" viewBox="0 0 17 15" preserveAspectRatio="none"><path d="M1.2 2.6a1.4 1.4 0 0 1 1.4-1.4h3.6l1.9 1.9h6.3a1.4 1.4 0 0 1 1.4 1.4v7.7a1.4 1.4 0 0 1-1.4 1.4H2.6a1.4 1.4 0 0 1-1.4-1.4z" fill="none" stroke="#dcdcdc" stroke-width="1.5"/></svg>
<span class="t" style="left:532.47px;top:93.00px;font-size:12px;color:#dedede;letter-spacing:-0.116px;transform:scaleX(0.851);">CSS</span>
<svg style="left:571.2px;top:91.78px" width="17" height="14.2" viewBox="0 0 17 15" preserveAspectRatio="none"><path d="M1.2 2.6a1.4 1.4 0 0 1 1.4-1.4h3.6l1.9 1.9h6.3a1.4 1.4 0 0 1 1.4 1.4v7.7a1.4 1.4 0 0 1-1.4 1.4H2.6a1.4 1.4 0 0 1-1.4-1.4z" fill="none" stroke="#dcdcdc" stroke-width="1.5"/></svg>
<span class="t" style="left:594.84px;top:93.00px;font-size:12px;color:#dedede;letter-spacing:0.063px;">MySQL</span>
<svg style="left:650.72px;top:91.78px" width="17" height="14.2" viewBox="0 0 17 15" preserveAspectRatio="none"><path d="M1.2 2.6a1.4 1.4 0 0 1 1.4-1.4h3.6l1.9 1.9h6.3a1.4 1.4 0 0 1 1.4 1.4v7.7a1.4 1.4 0 0 1-1.4 1.4H2.6a1.4 1.4 0 0 1-1.4-1.4z" fill="none" stroke="#dcdcdc" stroke-width="1.5"/></svg>
<span class="t" style="left:674.42px;top:93.00px;font-size:12px;color:#dedede;letter-spacing:-0.279px;transform:scaleX(0.953);">PHP</span>
<svg style="left:714.72px;top:91.78px" width="17" height="14.2" viewBox="0 0 17 15" preserveAspectRatio="none"><path d="M1.2 2.6a1.4 1.4 0 0 1 1.4-1.4h3.6l1.9 1.9h6.3a1.4 1.4 0 0 1 1.4 1.4v7.7a1.4 1.4 0 0 1-1.4 1.4H2.6a1.4 1.4 0 0 1-1.4-1.4z" fill="none" stroke="#dcdcdc" stroke-width="1.5"/></svg>
<span class="t" style="left:738.58px;top:93.00px;font-size:12px;color:#dedede;letter-spacing:0.007px;">Email Template</span>
<svg style="left:836.32px;top:91.78px" width="17" height="14.2" viewBox="0 0 17 15" preserveAspectRatio="none"><path d="M1.2 2.6a1.4 1.4 0 0 1 1.4-1.4h3.6l1.9 1.9h6.3a1.4 1.4 0 0 1 1.4 1.4v7.7a1.4 1.4 0 0 1-1.4 1.4H2.6a1.4 1.4 0 0 1-1.4-1.4z" fill="none" stroke="#dcdcdc" stroke-width="1.5"/></svg>
<span class="t" style="left:860.15px;top:93.00px;font-size:12px;color:#dedede;letter-spacing:0.152px;transform:scaleX(1.029);">Python</span>
<svg style="left:916.32px;top:91.78px" width="17" height="14.2" viewBox="0 0 17 15" preserveAspectRatio="none"><path d="M1.2 2.6a1.4 1.4 0 0 1 1.4-1.4h3.6l1.9 1.9h6.3a1.4 1.4 0 0 1 1.4 1.4v7.7a1.4 1.4 0 0 1-1.4 1.4H2.6a1.4 1.4 0 0 1-1.4-1.4z" fill="none" stroke="#dcdcdc" stroke-width="1.5"/></svg>
<span class="t" style="left:940.38px;top:93.00px;font-size:12px;color:#dedede;letter-spacing:0.205px;">Flutter</span>
<svg style="left:993.12px;top:91.78px" width="17" height="14.2" viewBox="0 0 17 15" preserveAspectRatio="none"><path d="M1.2 2.6a1.4 1.4 0 0 1 1.4-1.4h3.6l1.9 1.9h6.3a1.4 1.4 0 0 1 1.4 1.4v7.7a1.4 1.4 0 0 1-1.4 1.4H2.6a1.4 1.4 0 0 1-1.4-1.4z" fill="none" stroke="#dcdcdc" stroke-width="1.5"/></svg>
<span class="t" style="left:1017.22px;top:93.00px;font-size:12px;color:#dedede;letter-spacing:-0.189px;transform:scaleX(0.894);">SQL</span>
<svg style="left:1056.0px;top:91.78px" width="17" height="14.2" viewBox="0 0 17 15" preserveAspectRatio="none"><path d="M1.2 2.6a1.4 1.4 0 0 1 1.4-1.4h3.6l1.9 1.9h6.3a1.4 1.4 0 0 1 1.4 1.4v7.7a1.4 1.4 0 0 1-1.4 1.4H2.6a1.4 1.4 0 0 1-1.4-1.4z" fill="none" stroke="#dcdcdc" stroke-width="1.5"/></svg>
<span class="t" style="left:1079.80px;top:93.00px;font-size:12px;color:#dedede;">AnderCode</span>
<svg style="left:1158.4px;top:91.78px" width="17" height="14.2" viewBox="0 0 17 15" preserveAspectRatio="none"><path d="M1.2 2.6a1.4 1.4 0 0 1 1.4-1.4h3.6l1.9 1.9h6.3a1.4 1.4 0 0 1 1.4 1.4v7.7a1.4 1.4 0 0 1-1.4 1.4H2.6a1.4 1.4 0 0 1-1.4-1.4z" fill="none" stroke="#dcdcdc" stroke-width="1.5"/></svg>
<span class="t" style="left:1182.20px;top:93.00px;font-size:12px;color:#dedede;letter-spacing:0.021px;">AnderCodev2</span>
<svg style="left:1273.6px;top:91.78px" width="17" height="14.2" viewBox="0 0 17 15" preserveAspectRatio="none"><path d="M1.2 2.6a1.4 1.4 0 0 1 1.4-1.4h3.6l1.9 1.9h6.3a1.4 1.4 0 0 1 1.4 1.4v7.7a1.4 1.4 0 0 1-1.4 1.4H2.6a1.4 1.4 0 0 1-1.4-1.4z" fill="none" stroke="#dcdcdc" stroke-width="1.5"/></svg>
<span class="t" style="left:1297.23px;top:93.00px;font-size:12px;color:#dedede;letter-spacing:-0.153px;">Libros</span>
<svg style="left:1347.2px;top:91.78px" width="17" height="14.2" viewBox="0 0 17 15" preserveAspectRatio="none"><path d="M1.2 2.6a1.4 1.4 0 0 1 1.4-1.4h3.6l1.9 1.9h6.3a1.4 1.4 0 0 1 1.4 1.4v7.7a1.4 1.4 0 0 1-1.4 1.4H2.6a1.4 1.4 0 0 1-1.4-1.4z" fill="none" stroke="#dcdcdc" stroke-width="1.5"/></svg>
<span class="t" style="left:1371.20px;top:93.00px;font-size:12px;color:#dedede;">Videos</span>
<svg style="left:1425.6px;top:91.78px" width="17" height="14.2" viewBox="0 0 17 15" preserveAspectRatio="none"><path d="M1.2 2.6a1.4 1.4 0 0 1 1.4-1.4h3.6l1.9 1.9h6.3a1.4 1.4 0 0 1 1.4 1.4v7.7a1.4 1.4 0 0 1-1.4 1.4H2.6a1.4 1.4 0 0 1-1.4-1.4z" fill="none" stroke="#dcdcdc" stroke-width="1.5"/></svg>
<span class="t" style="left:1449.34px;top:93.00px;font-size:12px;color:#dedede;letter-spacing:-0.180px;">Gw2</span>
<svg style="left:1491.2px;top:91.78px" width="17" height="14.2" viewBox="0 0 17 15" preserveAspectRatio="none"><path d="M1.2 2.6a1.4 1.4 0 0 1 1.4-1.4h3.6l1.9 1.9h6.3a1.4 1.4 0 0 1 1.4 1.4v7.7a1.4 1.4 0 0 1-1.4 1.4H2.6a1.4 1.4 0 0 1-1.4-1.4z" fill="none" stroke="#dcdcdc" stroke-width="1.5"/></svg>
<span class="t" style="left:1514.41px;top:93.00px;font-size:12px;color:#dedede;letter-spacing:-0.255px;">IA</span>
<svg style="left:1544.0px;top:91.78px" width="17" height="14.2" viewBox="0 0 17 15" preserveAspectRatio="none"><path d="M1.2 2.6a1.4 1.4 0 0 1 1.4-1.4h3.6l1.9 1.9h6.3a1.4 1.4 0 0 1 1.4 1.4v7.7a1.4 1.4 0 0 1-1.4 1.4H2.6a1.4 1.4 0 0 1-1.4-1.4z" fill="none" stroke="#dcdcdc" stroke-width="1.5"/></svg>
<span class="t" style="left:1567.80px;top:93.00px;font-size:12px;color:#dedede;letter-spacing:0.201px;transform:scaleX(1.009);">Anime</span>
<svg style="left:1619.2px;top:91.78px" width="17" height="14.2" viewBox="0 0 17 15" preserveAspectRatio="none"><path d="M1.2 2.6a1.4 1.4 0 0 1 1.4-1.4h3.6l1.9 1.9h6.3a1.4 1.4 0 0 1 1.4 1.4v7.7a1.4 1.4 0 0 1-1.4 1.4H2.6a1.4 1.4 0 0 1-1.4-1.4z" fill="none" stroke="#dcdcdc" stroke-width="1.5"/></svg>
<span class="t" style="left:1642.37px;top:93.00px;font-size:12px;color:#dedede;letter-spacing:0.174px;transform:scaleX(1.059);">HTML</span>
<svg style="left:1764.8px;top:91.78px" width="17" height="14.2" viewBox="0 0 17 15" preserveAspectRatio="none"><path d="M1.2 2.6a1.4 1.4 0 0 1 1.4-1.4h3.6l1.9 1.9h6.3a1.4 1.4 0 0 1 1.4 1.4v7.7a1.4 1.4 0 0 1-1.4 1.4H2.6a1.4 1.4 0 0 1-1.4-1.4z" fill="none" stroke="#dcdcdc" stroke-width="1.5"/></svg>
<span class="t" style="left:1787.53px;top:93.00px;font-size:12px;color:#dedede;letter-spacing:0.049px;">Todos los marcadores</span>
<div class="a" style="left:1747.2px;top:90.88px;width:1.300px;height:16px;background:#666"></div>
<div id="vscroll"><div id="thumb"></div><div class="arr" style="top:7px;border-bottom:4px solid #8a8a8a"></div><div class="arr" style="bottom:6px;border-top:4.500px solid #d2d2d2"></div></div>
<div class="a" style="left:0;top:1014.88px;width:175.2px;height:24px;background:#1f1f1f;border-top-right-radius:5px;border-top:1px solid #4a4a4a;border-right:1px solid #4a4a4a"></div><span class="t" style="left:6.60px;top:1018.00px;font-size:12px;color:#d9d9d9;letter-spacing:-0.085px;">127.0.0.1:8000/products/create</span><div class="a" style="left:1918px;top:0;width:2px;height:1034px;background:#000"></div><div class="a" style="left:0;top:0;width:4.300px;height:1034px;background:#000"></div>
</div>
<div id="botmask"></div>
</body>
</html>
